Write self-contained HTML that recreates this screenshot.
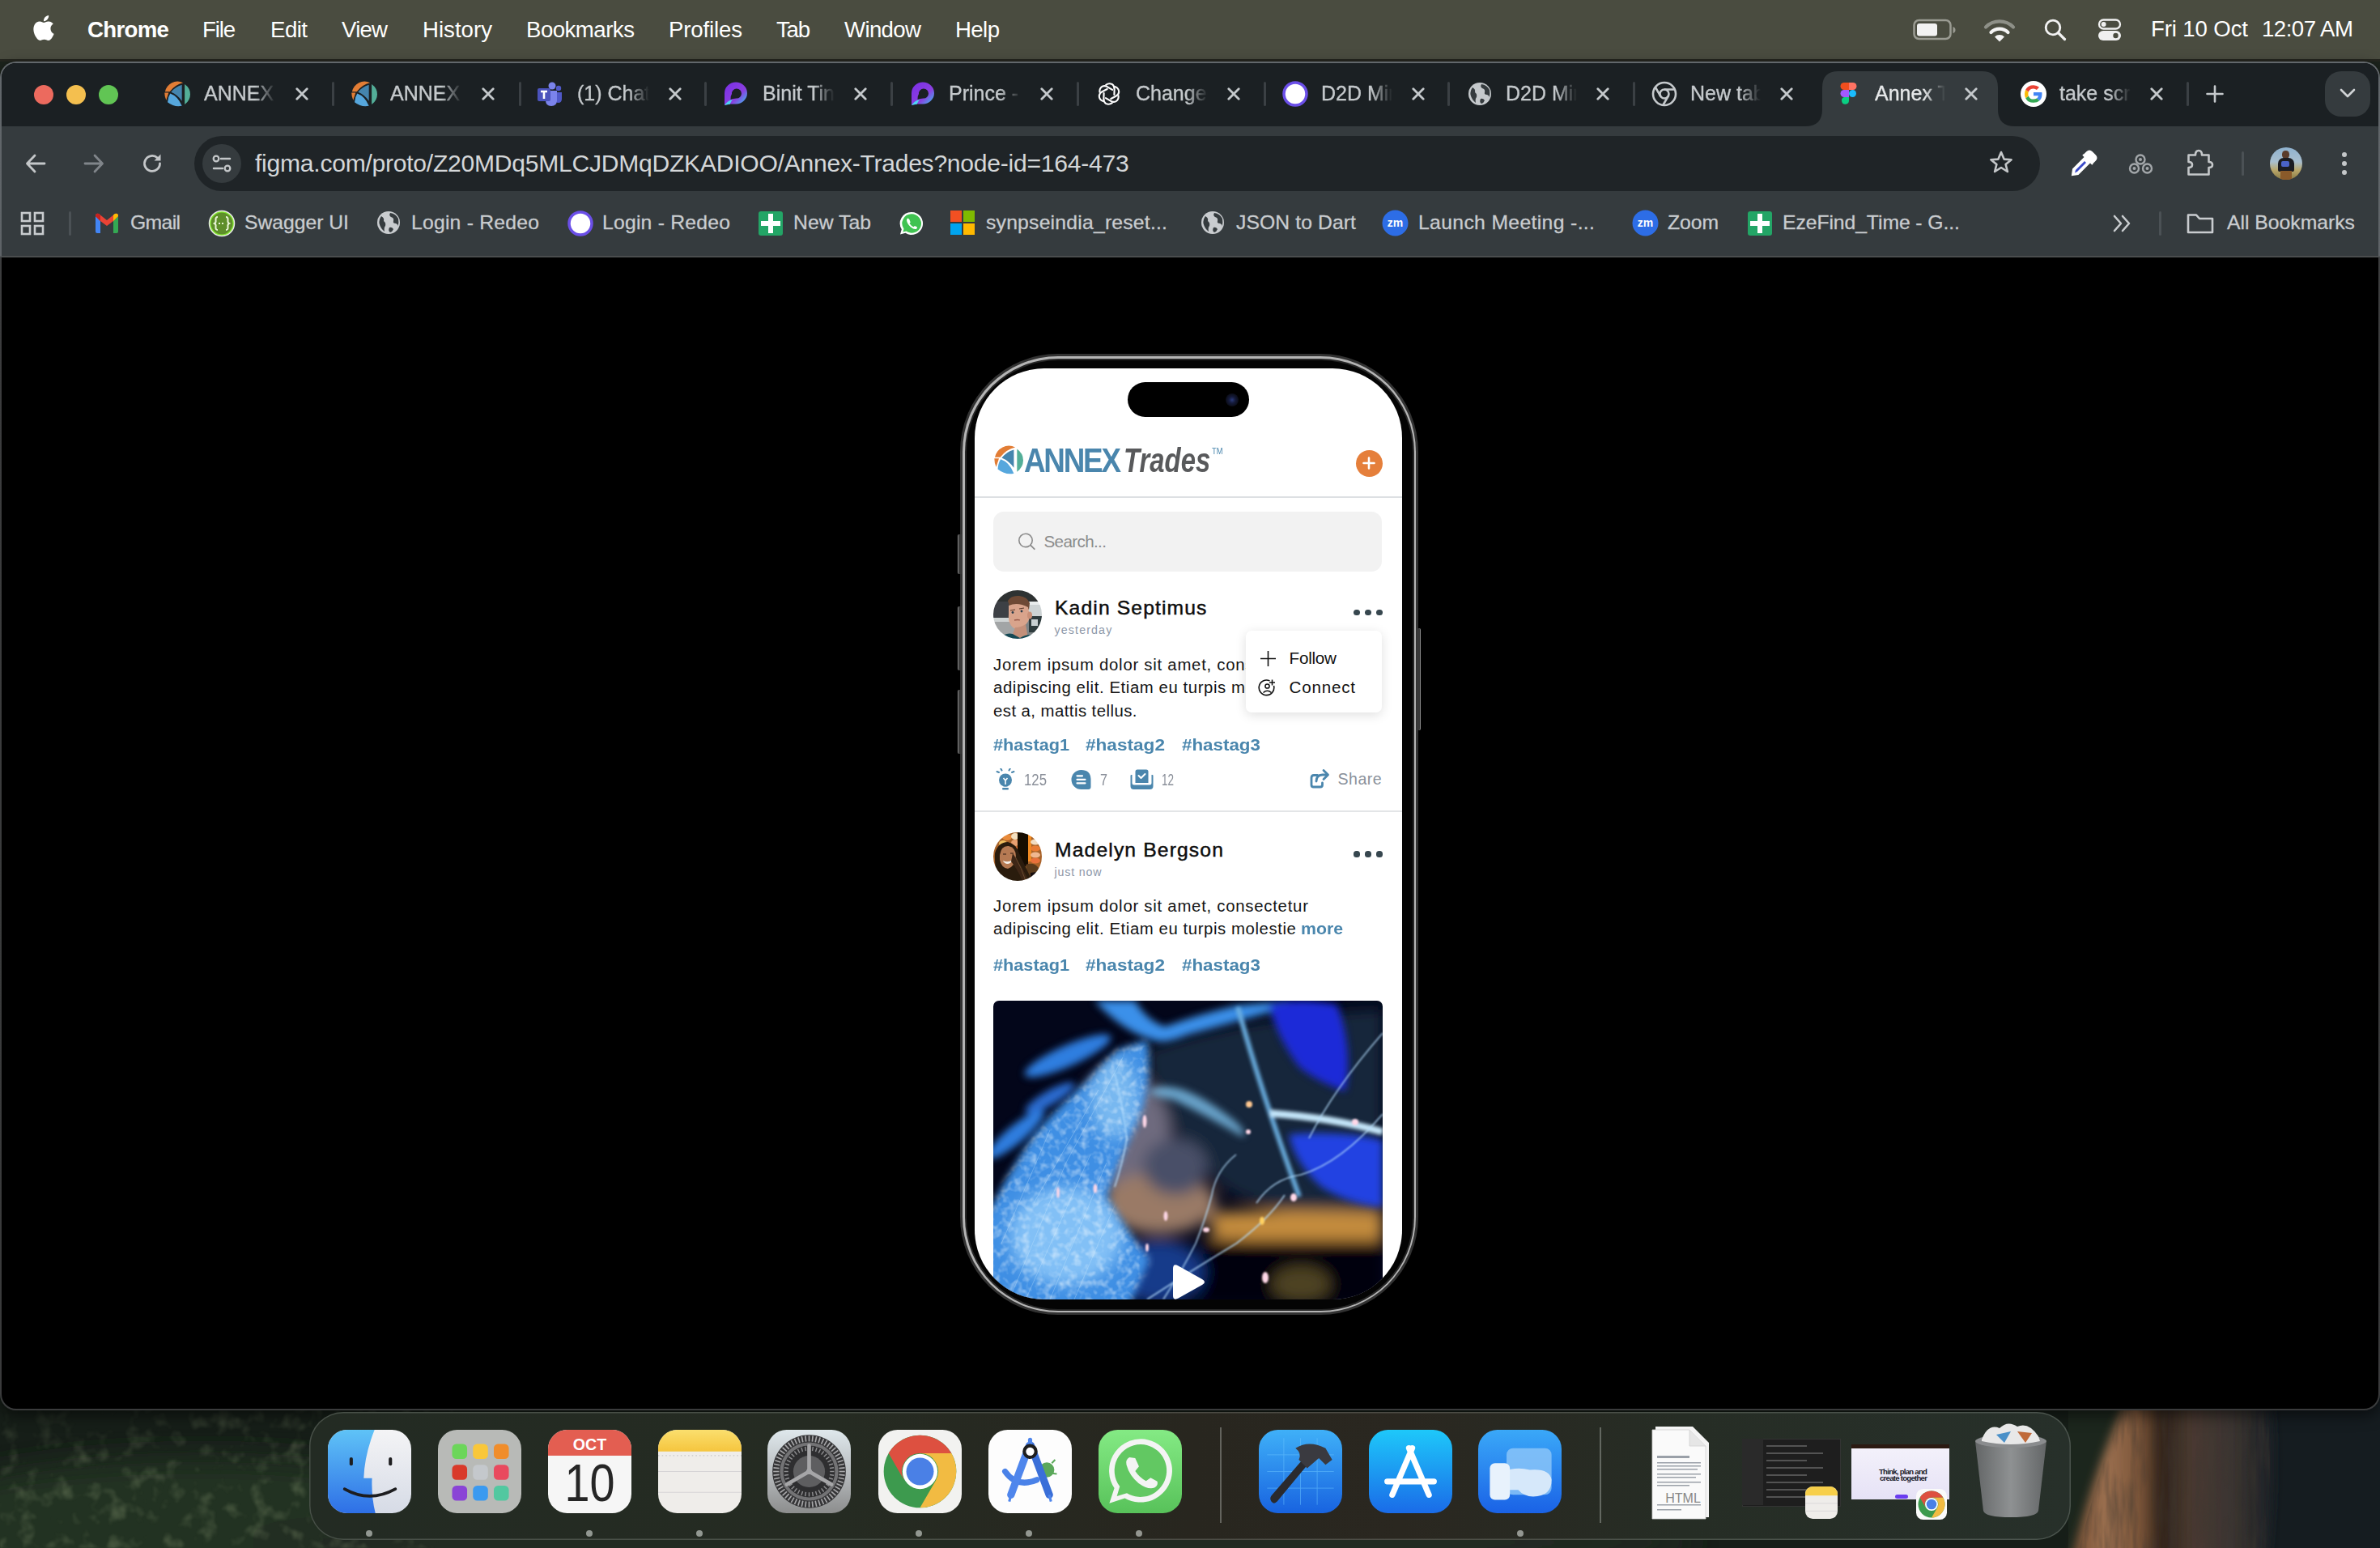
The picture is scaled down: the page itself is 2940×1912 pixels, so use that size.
<!DOCTYPE html><html><head><meta charset="utf-8"><style>
html,body{margin:0;padding:0;width:2940px;height:1912px;overflow:hidden;background:#1c231c;}
body{position:relative;font-family:"Liberation Sans",sans-serif;}
.a{position:absolute;}
.t{position:absolute;white-space:nowrap;line-height:1;}
</style></head><body>
<div class="a" style="left:0;top:1700px;width:2940px;height:212px;overflow:hidden;background:#19211a;"><svg width="2940" height="212" style="position:absolute;left:0;top:0"><defs><filter id="wb" x="-20%" y="-50%" width="140%" height="200%"><feGaussianBlur stdDeviation="18"/></filter><filter id="wb2"><feGaussianBlur stdDeviation="6"/></filter><filter id="leaf" x="0" y="0" width="100%" height="100%"><feTurbulence type="fractalNoise" baseFrequency="0.045" numOctaves="3" seed="7"/><feColorMatrix values="0 0 0 0 0.30  0 0 0 0 0.37  0 0 0 0 0.20  0 0 0 1.7 -0.88"/><feGaussianBlur stdDeviation="1.2"/></filter><linearGradient id="lm" x1="0" y1="0" x2="0.3" y2="1"><stop offset="0" stop-color="#000"/><stop offset="0.6" stop-color="#fff"/></linearGradient><mask id="lmask"><rect x="0" y="0" width="560" height="212" fill="url(#lm)"/></mask><linearGradient id="trunk" x1="0" y1="0" x2="1" y2="0"><stop offset="0" stop-color="#6e4a30"/><stop offset="0.18" stop-color="#9c7050"/><stop offset="0.35" stop-color="#7a5438"/><stop offset="0.45" stop-color="#2e221a"/><stop offset="0.6" stop-color="#4a3a30"/><stop offset="0.8" stop-color="#3a3430"/><stop offset="1" stop-color="#1a2026"/></linearGradient></defs><rect x="0" y="0" width="2940" height="212" fill="#161e18"/><g filter="url(#wb)"><ellipse cx="250" cy="180" rx="380" ry="80" fill="#243020"/><ellipse cx="1200" cy="205" rx="900" ry="45" fill="#222c20"/></g><g mask="url(#lmask)"><rect x="0" y="40" width="560" height="172" filter="url(#leaf)" opacity="0.55"/></g><rect x="2560" y="0" width="380" height="212" fill="#151c20"/><rect x="2555" y="0" width="80" height="212" fill="#1c261d"/><filter id="bark" x="0" y="0" width="100%" height="100%"><feTurbulence type="fractalNoise" baseFrequency="0.10 0.015" numOctaves="3" seed="9"/><feColorMatrix values="0 0 0 0 0.05  0 0 0 0 0.04  0 0 0 0 0.03  0 0 0 1.8 -0.7"/></filter><path d="M2626 30 L2805 30 Q2815 120 2800 240 L2555 240 Q2585 120 2626 30Z" fill="url(#trunk)" filter="url(#wb2)"/><clipPath id="tclip"><path d="M2626 30 L2800 30 Q2810 120 2796 240 L2562 240 Q2590 120 2626 30Z"/></clipPath><g clip-path="url(#tclip)"><rect x="2540" y="30" width="280" height="200" filter="url(#bark)" opacity="0.55"/></g></svg></div>
<div class="a" style="left:0px;top:0px;width:2940px;height:76px;background:#4a4c40;"></div>
<div class="a" style="left:0px;top:73px;width:2940px;height:3px;background:#25261f;"></div>
<svg class="a" style="left:41px;top:19px;overflow:visible;" width="26" height="31" viewBox="2.6 0 18.8 24"><path fill="#fff" d="M12.152 6.896c-.948 0-2.415-1.078-3.96-1.04-2.04.027-3.91 1.183-4.961 3.014-2.117 3.675-.546 9.103 1.519 12.09 1.013 1.454 2.208 3.09 3.792 3.039 1.52-.065 2.09-.987 3.935-.987 1.831 0 2.35.987 3.96.948 1.637-.026 2.676-1.48 3.676-2.948 1.156-1.688 1.636-3.325 1.662-3.415-.039-.013-3.182-1.221-3.22-4.857-.026-3.04 2.48-4.494 2.597-4.559-1.429-2.09-3.623-2.324-4.39-2.376-2-.156-3.675 1.09-4.61 1.09zM15.53 3.83c.843-1.012 1.4-2.427 1.245-3.83-1.207.052-2.662.805-3.532 1.818-.78.896-1.454 2.338-1.273 3.714 1.338.104 2.715-.688 3.559-1.701"/></svg>
<div class="t" style="left:108.0px;top:22.6px;font-size:27.62px;color:#ffffff;font-weight:700;letter-spacing:-0.669px;">Chrome</div>
<div class="t" style="left:250.0px;top:22.6px;font-size:27.62px;color:#ffffff;letter-spacing:-1.167px;">File</div>
<div class="t" style="left:334.0px;top:22.6px;font-size:27.62px;color:#ffffff;letter-spacing:-0.529px;">Edit</div>
<div class="t" style="left:422.0px;top:22.6px;font-size:27.62px;color:#ffffff;letter-spacing:-0.787px;">View</div>
<div class="t" style="left:522.0px;top:22.6px;font-size:27.62px;color:#ffffff;letter-spacing:0.012px;">History</div>
<div class="t" style="left:650.0px;top:22.6px;font-size:27.62px;color:#ffffff;letter-spacing:-0.516px;">Bookmarks</div>
<div class="t" style="left:826.0px;top:22.6px;font-size:27.62px;color:#ffffff;letter-spacing:-0.156px;">Profiles</div>
<div class="t" style="left:959.0px;top:22.6px;font-size:27.62px;color:#ffffff;letter-spacing:-1.263px;">Tab</div>
<div class="t" style="left:1043.0px;top:22.6px;font-size:27.62px;color:#ffffff;letter-spacing:-0.645px;">Window</div>
<div class="t" style="left:1180.0px;top:22.6px;font-size:27.62px;color:#ffffff;letter-spacing:-0.600px;">Help</div>
<div class="t" style="left:2657.0px;top:22.1px;font-size:27.62px;color:#ffffff;letter-spacing:-0.136px;">Fri 10 Oct</div>
<div class="t" style="left:2794.0px;top:22.1px;font-size:27.62px;color:#ffffff;letter-spacing:-0.526px;">12:07 AM</div>
<svg class="a" style="left:2362px;top:22px;" width="56" height="30" viewBox="0 0 56 30"><rect x="2.5" y="3" width="45" height="23" rx="6" fill="none" stroke="#9a9b92" stroke-width="2.5"/><rect x="6" y="7" width="25" height="15.5" rx="3" fill="#f2f2f2"/><path d="M50.5 11 q3 1 3 4 q0 3 -3 4z" fill="#9a9b92"/></svg>
<svg class="a" style="left:2450px;top:22px;" width="40" height="30" viewBox="0 0 40 30"><path d="M3 11.5 A24 24 0 0 1 37 11.5" fill="none" stroke="#8e9088" stroke-width="4.2" stroke-linecap="round"/><path d="M9.5 18 A15 15 0 0 1 30.5 18" fill="none" stroke="#f4f4f4" stroke-width="4.2" stroke-linecap="round"/><path d="M14 23.5 A8.5 8.5 0 0 1 26 23.5 L20 29.5z" fill="#f4f4f4"/></svg>
<svg class="a" style="left:2524px;top:22px;" width="30" height="30" viewBox="0 0 30 30"><circle cx="12" cy="12" r="8.8" fill="none" stroke="#f2f2f2" stroke-width="2.8"/><path d="M18.5 18.5 L26.5 26.5" stroke="#f2f2f2" stroke-width="3.2" stroke-linecap="round"/></svg>
<svg class="a" style="left:2590px;top:22px;" width="32" height="30" viewBox="0 0 32 30"><rect x="3" y="2.5" width="26" height="11" rx="5.5" fill="none" stroke="#f0f0f0" stroke-width="2.3"/><circle cx="8.6" cy="8" r="3" fill="#f0f0f0"/><rect x="2" y="16" width="28" height="12" rx="6" fill="#f0f0f0"/><circle cx="23.5" cy="22" r="3.2" fill="#4a4c40"/></svg>
<div class="a" style="left:0px;top:76px;width:2940px;height:1666px;background:linear-gradient(180deg,#62676b 0px,#5e6367 240px,#3c3d3e 242px,#3a3b3c 100%);border-radius:20px;box-shadow:0 6px 18px rgba(0,0,0,0.55);"></div>
<div class="a" style="left:2px;top:78px;width:2936px;height:1662px;background:#000;border-radius:18px;overflow:hidden;"></div>
<div class="a" style="left:2px;top:78px;width:2936px;height:78px;background:#1b2023;border-radius:18px 18px 0 0;"></div>
<div class="a" style="left:2px;top:156px;width:2936px;height:160px;background:#353b3e;"></div>
<div class="a" style="left:2px;top:316px;width:2936px;height:2px;background:#4a4d4e;"></div>
<div class="a" style="left:42px;top:105px;width:24px;height:24px;background:#ec6a5e;border-radius:50%;"></div>
<div class="a" style="left:82px;top:105px;width:24px;height:24px;background:#f4bf4f;border-radius:50%;"></div>
<div class="a" style="left:122px;top:105px;width:24px;height:24px;background:#61c554;border-radius:50%;"></div>
<svg class="a" style="left:2230px;top:88px;" width="260" height="68" viewBox="0 0 260 68"><path d="M0 68 Q21 68 21 47 L21 20 Q21 0 41 0 L218 0 Q238 0 238 20 L238 47 Q238 68 259 68 Z" fill="#353b3e"/></svg>
<svg class="a" style="left:203px;top:100px;" width="32" height="32" viewBox="0 0 36 36"><path d="M1 14.8 A17.5 17.5 0 0 1 26.1 2.5 Q15 5 7.6 14.8 Z" fill="#e27d35"/><path d="M0.3 16.3 L6 16.3 L2.6 26.7 Q0.3 22 0.3 16.3 Z" fill="#e27d35"/><path d="M9.4 15.6 Q15 8 24.4 5.4 L24.4 27.8 Q18 19 9.4 15.6 Z" fill="#4585ae"/><path d="M8.2 17.3 Q19 21 24.4 34.7 Q14 37 4.5 29.5 Q5 22 8.2 17.3 Z" fill="#56a7dd"/><path d="M28.3 4.5 Q36 10 36 18.5 Q36 27 28.3 32.7 Z" fill="#53ae98"/></svg>
<div class="a" style="left:252px;top:96px;width:89px;height:40px;overflow:hidden;-webkit-mask-image:linear-gradient(90deg,#000 0,#000 63px,transparent 89px);"><div class="t" style="left:0;top:7.4px;font-size:25.0px;color:#c5c9cc;-webkit-text-stroke:0.35px #c5c9cc;">ANNEX Trades</div></div>
<svg class="a" style="left:365px;top:108px;" width="16" height="16" viewBox="0 0 16 16"><path d="M1.8 1.8 L14.2 14.2 M14.2 1.8 L1.8 14.2" stroke="#c5c9cc" stroke-width="2.8" stroke-linecap="round"/></svg>
<div class="a" style="left:409.5px;top:101px;width:3px;height:30px;background:#3b4044;border-radius:2px;"></div>
<svg class="a" style="left:434px;top:100px;" width="32" height="32" viewBox="0 0 36 36"><path d="M1 14.8 A17.5 17.5 0 0 1 26.1 2.5 Q15 5 7.6 14.8 Z" fill="#e27d35"/><path d="M0.3 16.3 L6 16.3 L2.6 26.7 Q0.3 22 0.3 16.3 Z" fill="#e27d35"/><path d="M9.4 15.6 Q15 8 24.4 5.4 L24.4 27.8 Q18 19 9.4 15.6 Z" fill="#4585ae"/><path d="M8.2 17.3 Q19 21 24.4 34.7 Q14 37 4.5 29.5 Q5 22 8.2 17.3 Z" fill="#56a7dd"/><path d="M28.3 4.5 Q36 10 36 18.5 Q36 27 28.3 32.7 Z" fill="#53ae98"/></svg>
<div class="a" style="left:482px;top:96px;width:89px;height:40px;overflow:hidden;-webkit-mask-image:linear-gradient(90deg,#000 0,#000 63px,transparent 89px);"><div class="t" style="left:0;top:7.4px;font-size:25.0px;color:#c5c9cc;-webkit-text-stroke:0.35px #c5c9cc;">ANNEX Trades</div></div>
<svg class="a" style="left:595px;top:108px;" width="16" height="16" viewBox="0 0 16 16"><path d="M1.8 1.8 L14.2 14.2 M14.2 1.8 L1.8 14.2" stroke="#c5c9cc" stroke-width="2.8" stroke-linecap="round"/></svg>
<div class="a" style="left:640.5px;top:101px;width:3px;height:30px;background:#3b4044;border-radius:2px;"></div>
<svg class="a" style="left:663px;top:100px;" width="32" height="32" viewBox="0 0 32 32"><circle cx="19" cy="6" r="4.5" fill="#7b83eb"/><circle cx="27" cy="9" r="3.2" fill="#5059c9"/><path d="M23 14 H31 V22 Q31 27 26.5 27 Q23 27 23 22Z" fill="#5059c9"/><path d="M11 12 H25 V24 Q25 31 18 31 Q11 31 11 24Z" fill="#7b83eb"/><rect x="1" y="9" width="16" height="16" rx="2" fill="#4b53bc"/><path d="M5 13 H13 M9 13 V22" stroke="#fff" stroke-width="2.6"/></svg>
<div class="a" style="left:713px;top:96px;width:89px;height:40px;overflow:hidden;-webkit-mask-image:linear-gradient(90deg,#000 0,#000 63px,transparent 89px);"><div class="t" style="left:0;top:7.4px;font-size:25.0px;color:#c5c9cc;-webkit-text-stroke:0.35px #c5c9cc;">(1) Chat | Microsoft Teams</div></div>
<svg class="a" style="left:826px;top:108px;" width="16" height="16" viewBox="0 0 16 16"><path d="M1.8 1.8 L14.2 14.2 M14.2 1.8 L1.8 14.2" stroke="#c5c9cc" stroke-width="2.8" stroke-linecap="round"/></svg>
<div class="a" style="left:869.5px;top:101px;width:3px;height:30px;background:#3b4044;border-radius:2px;"></div>
<svg class="a" style="left:893px;top:100px;" width="32" height="32" viewBox="0 0 32 32"><defs><linearGradient id="lg909" x1="0" y1="0" x2="1" y2="1"><stop offset="0" stop-color="#7a2ee6"/><stop offset="0.6" stop-color="#8b3fe0"/><stop offset="1" stop-color="#2fd1f0"/></linearGradient></defs><path d="M2 30 L2 15 A14 13.5 0 1 1 16 28.5 L9 28.5 Q3 29 2 30Z" fill="url(#lg909)"/><path d="M9.5 23 Q9 19 11 16 A6 6 0 1 1 16.5 21.5 Q12.5 21.5 9.5 23Z" fill="#1b2023"/><path d="M2 30 Q6 24 12 23 Q9 27 9 28.5 Z" fill="#4fd4f5"/></svg>
<div class="a" style="left:942px;top:96px;width:89px;height:40px;overflow:hidden;-webkit-mask-image:linear-gradient(90deg,#000 0,#000 63px,transparent 89px);"><div class="t" style="left:0;top:7.4px;font-size:25.0px;color:#c5c9cc;-webkit-text-stroke:0.35px #c5c9cc;">Binit Tin</div></div>
<svg class="a" style="left:1055px;top:108px;" width="16" height="16" viewBox="0 0 16 16"><path d="M1.8 1.8 L14.2 14.2 M14.2 1.8 L1.8 14.2" stroke="#c5c9cc" stroke-width="2.8" stroke-linecap="round"/></svg>
<div class="a" style="left:1099.5px;top:101px;width:3px;height:30px;background:#3b4044;border-radius:2px;"></div>
<svg class="a" style="left:1124px;top:100px;" width="32" height="32" viewBox="0 0 32 32"><defs><linearGradient id="lg1140" x1="0" y1="0" x2="1" y2="1"><stop offset="0" stop-color="#7a2ee6"/><stop offset="0.6" stop-color="#8b3fe0"/><stop offset="1" stop-color="#2fd1f0"/></linearGradient></defs><path d="M2 30 L2 15 A14 13.5 0 1 1 16 28.5 L9 28.5 Q3 29 2 30Z" fill="url(#lg1140)"/><path d="M9.5 23 Q9 19 11 16 A6 6 0 1 1 16.5 21.5 Q12.5 21.5 9.5 23Z" fill="#1b2023"/><path d="M2 30 Q6 24 12 23 Q9 27 9 28.5 Z" fill="#4fd4f5"/></svg>
<div class="a" style="left:1172px;top:96px;width:89px;height:40px;overflow:hidden;-webkit-mask-image:linear-gradient(90deg,#000 0,#000 63px,transparent 89px);"><div class="t" style="left:0;top:7.4px;font-size:25.0px;color:#c5c9cc;-webkit-text-stroke:0.35px #c5c9cc;">Prince - Loop</div></div>
<svg class="a" style="left:1285px;top:108px;" width="16" height="16" viewBox="0 0 16 16"><path d="M1.8 1.8 L14.2 14.2 M14.2 1.8 L1.8 14.2" stroke="#c5c9cc" stroke-width="2.8" stroke-linecap="round"/></svg>
<div class="a" style="left:1329.5px;top:101px;width:3px;height:30px;background:#3b4044;border-radius:2px;"></div>
<svg class="a" style="left:1354px;top:100px;" width="32" height="32" viewBox="0 0 32 32"><path d="M12.2 4.8 Q16 2 20 4.2 Q23 6.5 22.6 10.5 L22.4 17" fill="none" stroke="#fff" stroke-width="2.1" stroke-linecap="round" transform="rotate(0 16 16)"/><path d="M12.2 4.8 Q16 2 20 4.2 Q23 6.5 22.6 10.5 L22.4 17" fill="none" stroke="#fff" stroke-width="2.1" stroke-linecap="round" transform="rotate(60 16 16)"/><path d="M12.2 4.8 Q16 2 20 4.2 Q23 6.5 22.6 10.5 L22.4 17" fill="none" stroke="#fff" stroke-width="2.1" stroke-linecap="round" transform="rotate(120 16 16)"/><path d="M12.2 4.8 Q16 2 20 4.2 Q23 6.5 22.6 10.5 L22.4 17" fill="none" stroke="#fff" stroke-width="2.1" stroke-linecap="round" transform="rotate(180 16 16)"/><path d="M12.2 4.8 Q16 2 20 4.2 Q23 6.5 22.6 10.5 L22.4 17" fill="none" stroke="#fff" stroke-width="2.1" stroke-linecap="round" transform="rotate(240 16 16)"/><path d="M12.2 4.8 Q16 2 20 4.2 Q23 6.5 22.6 10.5 L22.4 17" fill="none" stroke="#fff" stroke-width="2.1" stroke-linecap="round" transform="rotate(300 16 16)"/></svg>
<div class="a" style="left:1403px;top:96px;width:89px;height:40px;overflow:hidden;-webkit-mask-image:linear-gradient(90deg,#000 0,#000 63px,transparent 89px);"><div class="t" style="left:0;top:7.4px;font-size:25.0px;color:#c5c9cc;-webkit-text-stroke:0.35px #c5c9cc;">ChangeGPT</div></div>
<svg class="a" style="left:1516px;top:108px;" width="16" height="16" viewBox="0 0 16 16"><path d="M1.8 1.8 L14.2 14.2 M14.2 1.8 L1.8 14.2" stroke="#c5c9cc" stroke-width="2.8" stroke-linecap="round"/></svg>
<div class="a" style="left:1560.5px;top:101px;width:3px;height:30px;background:#3b4044;border-radius:2px;"></div>
<svg class="a" style="left:1584px;top:100px;" width="32" height="32" viewBox="0 0 32 32"><circle cx="16" cy="16" r="14" fill="#fff" stroke="#6b4fe8" stroke-width="3.5"/></svg>
<div class="a" style="left:1632px;top:96px;width:88px;height:40px;overflow:hidden;-webkit-mask-image:linear-gradient(90deg,#000 0,#000 62px,transparent 88px);"><div class="t" style="left:0;top:7.4px;font-size:25.0px;color:#c5c9cc;-webkit-text-stroke:0.35px #c5c9cc;">D2D Mini</div></div>
<svg class="a" style="left:1744px;top:108px;" width="16" height="16" viewBox="0 0 16 16"><path d="M1.8 1.8 L14.2 14.2 M14.2 1.8 L1.8 14.2" stroke="#c5c9cc" stroke-width="2.8" stroke-linecap="round"/></svg>
<div class="a" style="left:1787.5px;top:101px;width:3px;height:30px;background:#3b4044;border-radius:2px;"></div>
<svg class="a" style="left:1813px;top:101px;" width="30" height="30" viewBox="0 0 30 30"><circle cx="15" cy="15" r="14" fill="#c5c9cc"/><path d="M6 7 Q10 9 9 13 Q12 15 11 19 Q9 21 10 26 Q5 22 3.5 16 Q3 11 6 7Z M17 3 Q15 6 18 8 Q22 9 21 13 Q20 16 24 16 Q27 17 26.5 20 Q28 15 27 10 Q24 4 17 3Z M16 21 Q19 20 21 23 Q20 26 17 27 Q14 25 16 21Z" fill="#353b3e"/></svg>
<div class="a" style="left:1860px;top:96px;width:88px;height:40px;overflow:hidden;-webkit-mask-image:linear-gradient(90deg,#000 0,#000 62px,transparent 88px);"><div class="t" style="left:0;top:7.4px;font-size:25.0px;color:#c5c9cc;-webkit-text-stroke:0.35px #c5c9cc;">D2D Mini</div></div>
<svg class="a" style="left:1972px;top:108px;" width="16" height="16" viewBox="0 0 16 16"><path d="M1.8 1.8 L14.2 14.2 M14.2 1.8 L1.8 14.2" stroke="#c5c9cc" stroke-width="2.8" stroke-linecap="round"/></svg>
<div class="a" style="left:2016.5px;top:101px;width:3px;height:30px;background:#3b4044;border-radius:2px;"></div>
<svg class="a" style="left:2040px;top:100px;" width="32" height="32" viewBox="0 0 32 32"><circle cx="16" cy="16" r="14" fill="none" stroke="#c5c9cc" stroke-width="2.6"/><circle cx="16" cy="16" r="5.5" fill="none" stroke="#c5c9cc" stroke-width="2.6"/><path d="M16 10.5 H28.5 M11.3 18.8 L5 8 M20.7 18.8 L14.5 29.5" stroke="#c5c9cc" stroke-width="2.6"/></svg>
<div class="a" style="left:2088px;top:96px;width:87px;height:40px;overflow:hidden;-webkit-mask-image:linear-gradient(90deg,#000 0,#000 61px,transparent 87px);"><div class="t" style="left:0;top:7.4px;font-size:25.0px;color:#c5c9cc;-webkit-text-stroke:0.35px #c5c9cc;">New tab</div></div>
<svg class="a" style="left:2199px;top:108px;" width="16" height="16" viewBox="0 0 16 16"><path d="M1.8 1.8 L14.2 14.2 M14.2 1.8 L1.8 14.2" stroke="#c5c9cc" stroke-width="2.8" stroke-linecap="round"/></svg>
<svg class="a" style="left:2272px;top:101px;" width="24" height="30" viewBox="0 0 24 30"><path d="M6 1 H12 V10 H6 A4.5 4.5 0 0 1 6 1Z" fill="#f24e1e"/><path d="M12 1 H17 A4.5 4.5 0 0 1 17 10 H12Z" fill="#ff7262"/><path d="M6 10 H12 V19 H6 A4.5 4.5 0 0 1 6 10Z" fill="#a259ff"/><circle cx="16.5" cy="14.5" r="4.5" fill="#1abcfe"/><path d="M6 19 H12 V23.5 A4.5 4.5 0 1 1 6 19Z" fill="#0acf83"/></svg>
<div class="a" style="left:2316px;top:96px;width:87px;height:40px;overflow:hidden;-webkit-mask-image:linear-gradient(90deg,#000 0,#000 61px,transparent 87px);"><div class="t" style="left:0;top:7.4px;font-size:25.0px;color:#e6e8e9;-webkit-text-stroke:0.35px #e6e8e9;">Annex Trades</div></div>
<svg class="a" style="left:2427px;top:108px;" width="16" height="16" viewBox="0 0 16 16"><path d="M1.8 1.8 L14.2 14.2 M14.2 1.8 L1.8 14.2" stroke="#c5c9cc" stroke-width="2.8" stroke-linecap="round"/></svg>
<svg class="a" style="left:2496px;top:100px;" width="32" height="32" viewBox="0 0 32 32"><circle cx="16" cy="16" r="16" fill="#fff"/><path d="M26.5 16.3 Q26.5 15 26.3 14 H16 V18.2 H22 Q21.6 20.3 19.9 21.6 L23.4 24.3 Q26.5 21.5 26.5 16.3Z" fill="#4285f4"/><path d="M16 26.8 Q20.8 26.8 23.4 24.3 L19.9 21.6 Q18.4 22.6 16 22.6 Q11.4 22.6 9.8 18.4 L6.2 21.2 Q8.8 26.8 16 26.8Z" fill="#34a853"/><path d="M9.8 18.4 Q9.4 17.2 9.4 16 Q9.4 14.8 9.8 13.6 L6.2 10.8 Q5 13.2 5 16 Q5 18.8 6.2 21.2Z" fill="#fbbc05"/><path d="M16 9.4 Q18.1 9.4 19.9 10.9 L23 7.8 Q20.2 5.2 16 5.2 Q8.8 5.2 6.2 10.8 L9.8 13.6 Q11.4 9.4 16 9.4Z" fill="#ea4335"/></svg>
<div class="a" style="left:2544px;top:96px;width:88px;height:40px;overflow:hidden;-webkit-mask-image:linear-gradient(90deg,#000 0,#000 62px,transparent 88px);"><div class="t" style="left:0;top:7.4px;font-size:25.0px;color:#c5c9cc;-webkit-text-stroke:0.35px #c5c9cc;">take screenshot</div></div>
<svg class="a" style="left:2656px;top:108px;" width="16" height="16" viewBox="0 0 16 16"><path d="M1.8 1.8 L14.2 14.2 M14.2 1.8 L1.8 14.2" stroke="#c5c9cc" stroke-width="2.8" stroke-linecap="round"/></svg>
<div class="a" style="left:2700.5px;top:101px;width:3px;height:30px;background:#3b4044;border-radius:2px;"></div>
<svg class="a" style="left:2725px;top:105px;" width="22" height="22" viewBox="0 0 22 22"><path d="M11 1.5 V20.5 M1.5 11 H20.5" stroke="#c5c9cc" stroke-width="2.6" stroke-linecap="round"/></svg>
<div class="a" style="left:2872px;top:88px;width:56px;height:56px;background:#353b3e;border-radius:20px;"></div>
<svg class="a" style="left:2890px;top:108px;" width="20" height="14" viewBox="0 0 20 14"><path d="M2 3 L10 11 L18 3" fill="none" stroke="#d0d3d5" stroke-width="2.6" stroke-linecap="round" stroke-linejoin="round"/></svg>
<svg class="a" style="left:30px;top:188px;" width="28" height="28" viewBox="0 0 28 28"><path d="M25 14 H4 M13 4 L3.5 14 L13 24" fill="none" stroke="#c4c7c9" stroke-width="2.8" stroke-linecap="round" stroke-linejoin="round"/></svg>
<svg class="a" style="left:102px;top:188px;" width="28" height="28" viewBox="0 0 28 28"><path d="M3 14 H24 M15 4 L24.5 14 L15 24" fill="none" stroke="#80858a" stroke-width="2.8" stroke-linecap="round" stroke-linejoin="round"/></svg>
<svg class="a" style="left:174px;top:188px;" width="28" height="28" viewBox="0 0 28 28"><path d="M23.5 14 A9.5 9.5 0 1 1 20.5 7" fill="none" stroke="#c4c7c9" stroke-width="2.8" stroke-linecap="round"/><path d="M24.5 2.5 V10.5 H16.5z" fill="#c4c7c9"/></svg>
<div class="a" style="left:240px;top:168px;width:2280px;height:68px;background:#1f2427;border-radius:34px;"></div>
<div class="a" style="left:250px;top:178px;width:48px;height:48px;background:#353b3e;border-radius:50%;"></div>
<svg class="a" style="left:258px;top:186px;" width="32" height="32" viewBox="0 0 32 32"><circle cx="9" cy="10" r="3.3" fill="none" stroke="#c4c7c9" stroke-width="2.3"/><path d="M15 10 H26" stroke="#c4c7c9" stroke-width="2.5" stroke-linecap="round"/><circle cx="23" cy="22" r="3.3" fill="none" stroke="#c4c7c9" stroke-width="2.3"/><path d="M6 22 H17" stroke="#c4c7c9" stroke-width="2.5" stroke-linecap="round"/></svg>
<div class="t" style="left:315.0px;top:186.7px;font-size:30.09px;color:#d4d7d9;letter-spacing:-0.254px;">figma.com/proto/Z20MDq5MLCJDMqDZKADIOO/Annex-Trades?node-id=164-473</div>
<svg class="a" style="left:2456px;top:185px;" width="32" height="32" viewBox="0 0 32 32"><path d="M16 3 L19.6 11.6 L28.6 12.2 L21.6 18 L23.9 27 L16 22 L8.1 27 L10.4 18 L3.4 12.2 L12.4 11.6Z" fill="none" stroke="#c4c7c9" stroke-width="2.6" stroke-linejoin="round"/></svg>
<svg class="a" style="left:2554px;top:184px;" width="38" height="38" viewBox="0 0 38 38"><path d="M6 32 L7 25 L22 10 L28 16 L13 31 Z" fill="#fff" stroke="#fff" stroke-width="2"/><path d="M9 29.5 L10 26 L21 15 L23 17 L12 28z" fill="#3949c8"/><path d="M19 7 L31 19 M24 4 Q27 1 30 4 L34 8 Q37 11 34 14 L30 18 L20 8Z" fill="#fff" stroke="#fff" stroke-width="2" stroke-linejoin="round"/></svg>
<svg class="a" style="left:2628px;top:186px;" width="34" height="34" viewBox="0 0 34 34"><g fill="none" stroke="#a3a7aa" stroke-width="2.4"><circle cx="16" cy="11" r="5.5"/><circle cx="8.5" cy="22" r="5.5"/><circle cx="24.5" cy="22" r="5.5"/></g><g fill="#a3a7aa"><circle cx="16" cy="11" r="2"/><circle cx="8.5" cy="22" r="2"/><circle cx="24.5" cy="22" r="2"/></g></svg>
<svg class="a" style="left:2700px;top:183px;" width="36" height="36" viewBox="0 0 36 36"><path d="M3.5 8.5 H12 Q12 3 16 3 Q20 3 20 8.5 H28.5 V17 Q33 17 33 20.5 Q33 24 28.5 24 V32.5 H3.5 V24 Q8 24 8 20.5 Q8 17 3.5 17 Z" fill="none" stroke="#c4c7c9" stroke-width="2.6" stroke-linejoin="round"/></svg>
<div class="a" style="left:2768.5px;top:187px;width:3px;height:30px;background:#4b5155;border-radius:2px;"></div>
<div class="a" style="left:2804px;top:182px;width:40px;height:40px;border-radius:50%;overflow:hidden;background:linear-gradient(180deg,#8fb2cf 0%,#a9bfcf 45%,#b9a76a 70%,#8a7a45 100%);"><div class="a" style="left:15px;top:4px;width:9px;height:10px;border-radius:45%;background:#5a3b2a;"></div><div class="a" style="left:10px;top:13px;width:20px;height:17px;border-radius:7px 7px 2px 2px;background:#1b1c22;"></div><div class="a" style="left:14px;top:17px;width:10px;height:7px;background:#4a62c8;border-radius:2px;"></div><div class="a" style="left:13px;top:29px;width:14px;height:12px;background:#8a5a2a;"></div></div>
<div class="a" style="left:2893px;top:188px;width:6px;height:6px;background:#c4c7c9;border-radius:50%;"></div>
<div class="a" style="left:2893px;top:199px;width:6px;height:6px;background:#c4c7c9;border-radius:50%;"></div>
<div class="a" style="left:2893px;top:210px;width:6px;height:6px;background:#c4c7c9;border-radius:50%;"></div>
<svg class="a" style="left:24px;top:260px;" width="32" height="32" viewBox="0 0 32 32"><g fill="none" stroke="#c9cccf" stroke-width="2.6"><rect x="3" y="3" width="10" height="10"/><rect x="19" y="3" width="10" height="10"/><rect x="3" y="19" width="10" height="10"/><rect x="19" y="19" width="10" height="10"/></g></svg>
<div class="a" style="left:84.5px;top:261px;width:3px;height:30px;background:#4b5155;border-radius:2px;"></div>
<svg class="a" style="left:115px;top:258px;" width="34" height="34" viewBox="0 0 34 34"><path d="M3 9 L3 28 Q3 30 5 30 L9 30 L9 15 Z" fill="#4285f4"/><path d="M25 30 L29 30 Q31 30 31 28 L31 9 L25 15Z" fill="#34a853"/><path d="M3 9 Q3 5 7 6 L17 14 L27 6 Q31 5 31 9 L25 15 L17 21 L9 15 Z" fill="#ea4335"/><path d="M25 15 L31 9 Q31 5 27 6 L25 7.5Z" fill="#fbbc04"/><path d="M3 9 Q3 5 7 6 L9 7.5 L9 15 Z" fill="#c5221f"/></svg>
<div class="t" style="left:161.0px;top:263.1px;font-size:24.71px;color:#c9cccf;letter-spacing:-0.632px;-webkit-text-stroke:0.3px #c9cccf;">Gmail</div>
<svg class="a" style="left:257px;top:259px;" width="34" height="34" viewBox="0 0 34 34"><circle cx="17" cy="17" r="15.5" fill="#85ea2d" stroke="#e8e8e8" stroke-width="1.5"/><circle cx="17" cy="17" r="13.5" fill="#5e8e2a"/><path d="M12 9 Q9 9 9.5 13 Q10 16 8 17 Q10 18 9.5 21 Q9 25 12 25 M22 9 Q25 9 24.5 13 Q24 16 26 17 Q24 18 24.5 21 Q25 25 22 25" fill="none" stroke="#e9f4d6" stroke-width="2"/><path d="M13 17 H21" stroke="#e9f4d6" stroke-width="2" stroke-dasharray="2 2"/></svg>
<div class="t" style="left:302.0px;top:263.1px;font-size:24.71px;color:#c9cccf;letter-spacing:-0.011px;-webkit-text-stroke:0.3px #c9cccf;">Swagger UI</div>
<svg class="a" style="left:465px;top:260px;" width="30" height="30" viewBox="0 0 30 30"><circle cx="15" cy="15" r="14" fill="#c9cccf"/><path d="M6 7 Q10 9 9 13 Q12 15 11 19 Q9 21 10 26 Q5 22 3.5 16 Q3 11 6 7Z M17 3 Q15 6 18 8 Q22 9 21 13 Q20 16 24 16 Q27 17 26.5 20 Q28 15 27 10 Q24 4 17 3Z M16 21 Q19 20 21 23 Q20 26 17 27 Q14 25 16 21Z" fill="#353b3e"/></svg>
<div class="t" style="left:508.0px;top:263.1px;font-size:24.71px;color:#c9cccf;letter-spacing:0.230px;-webkit-text-stroke:0.3px #c9cccf;">Login - Redeo</div>
<svg class="a" style="left:700px;top:259px;" width="34" height="34" viewBox="0 0 34 34"><circle cx="17" cy="17" r="14" fill="#fff" stroke="#6b4fe8" stroke-width="3.5"/></svg>
<div class="t" style="left:744.0px;top:263.1px;font-size:24.71px;color:#c9cccf;letter-spacing:0.230px;-webkit-text-stroke:0.3px #c9cccf;">Login - Redeo</div>
<svg class="a" style="left:936px;top:260px;" width="32" height="32" viewBox="0 0 32 32"><rect x="1" y="1" width="30" height="30" rx="3" fill="#23a566"/><path d="M13 4 H19 V13 H28 V19 H19 V28 H13 V19 H4 V13 H13Z" fill="#fff"/></svg>
<div class="t" style="left:980.0px;top:263.1px;font-size:24.71px;color:#c9cccf;letter-spacing:0.052px;-webkit-text-stroke:0.3px #c9cccf;">New Tab</div>
<svg class="a" style="left:1109px;top:259px;" width="34" height="34" viewBox="0 0 34 34"><path d="M17 3 A14 14 0 1 1 9.5 28.8 L3 30.5 L4.8 24.3 A14 14 0 0 1 17 3Z" fill="#fff"/><path d="M17 5.3 A11.7 11.7 0 1 1 10.5 26.5 L6.4 27.6 L7.5 23.7 A11.7 11.7 0 0 1 17 5.3Z" fill="#40c351"/><path d="M12.5 10.5 Q11 11 11 13 Q11.5 17.5 16 21.5 Q20 24.5 22.5 24 Q24 23.5 24 21.5 L21 20 L19.5 21.3 Q16.5 20 14.5 17 L15.7 15.5 L14.3 12 Z" fill="#fff"/></svg>
<svg class="a" style="left:1172px;top:258px;" width="34" height="34" viewBox="0 0 34 34"><rect x="2" y="2" width="14" height="14" fill="#f25022"/><rect x="18" y="2" width="14" height="14" fill="#7fba00"/><rect x="2" y="18" width="14" height="14" fill="#00a4ef"/><rect x="18" y="18" width="14" height="14" fill="#ffb900"/></svg>
<div class="t" style="left:1218.0px;top:263.1px;font-size:24.71px;color:#c9cccf;letter-spacing:0.223px;-webkit-text-stroke:0.3px #c9cccf;">synpseindia_reset...</div>
<svg class="a" style="left:1483px;top:260px;" width="30" height="30" viewBox="0 0 30 30"><circle cx="15" cy="15" r="14" fill="#c9cccf"/><path d="M6 7 Q10 9 9 13 Q12 15 11 19 Q9 21 10 26 Q5 22 3.5 16 Q3 11 6 7Z M17 3 Q15 6 18 8 Q22 9 21 13 Q20 16 24 16 Q27 17 26.5 20 Q28 15 27 10 Q24 4 17 3Z M16 21 Q19 20 21 23 Q20 26 17 27 Q14 25 16 21Z" fill="#353b3e"/></svg>
<div class="t" style="left:1527.0px;top:263.1px;font-size:24.71px;color:#c9cccf;letter-spacing:0.098px;-webkit-text-stroke:0.3px #c9cccf;">JSON to Dart</div>
<svg class="a" style="left:1707px;top:259px;" width="33" height="33" viewBox="0 0 33 33"><circle cx="16.5" cy="16.5" r="16" fill="#2d6de6"/><text x="16.5" y="21" text-anchor="middle" font-family="Liberation Sans" font-weight="700" font-size="14" fill="#fff">zm</text></svg>
<div class="t" style="left:1752.0px;top:263.1px;font-size:24.71px;color:#c9cccf;letter-spacing:0.359px;-webkit-text-stroke:0.3px #c9cccf;">Launch Meeting -...</div>
<svg class="a" style="left:2016px;top:259px;" width="33" height="33" viewBox="0 0 33 33"><circle cx="16.5" cy="16.5" r="16" fill="#2d6de6"/><text x="16.5" y="21" text-anchor="middle" font-family="Liberation Sans" font-weight="700" font-size="14" fill="#fff">zm</text></svg>
<div class="t" style="left:2060.0px;top:263.1px;font-size:24.71px;color:#c9cccf;letter-spacing:-0.054px;-webkit-text-stroke:0.3px #c9cccf;">Zoom</div>
<svg class="a" style="left:2158px;top:260px;" width="32" height="32" viewBox="0 0 32 32"><rect x="1" y="1" width="30" height="30" rx="3" fill="#23a566"/><path d="M13 4 H19 V13 H28 V19 H19 V28 H13 V19 H4 V13 H13Z" fill="#fff"/></svg>
<div class="t" style="left:2202.0px;top:263.1px;font-size:24.71px;color:#c9cccf;letter-spacing:-0.064px;-webkit-text-stroke:0.3px #c9cccf;">EzeFind_Time - G...</div>
<svg class="a" style="left:2608px;top:263px;" width="28" height="26" viewBox="0 0 28 26"><path d="M4 4 L12 13 L4 22 M14 4 L22 13 L14 22" fill="none" stroke="#c9cccf" stroke-width="2.6" stroke-linecap="round" stroke-linejoin="round"/></svg>
<div class="a" style="left:2666.5px;top:261px;width:3px;height:30px;background:#4b5155;border-radius:2px;"></div>
<svg class="a" style="left:2700px;top:262px;" width="36" height="28" viewBox="0 0 36 28"><path d="M3 3.5 H13 L17 8 H33 V25 H3 Z" fill="none" stroke="#c9cccf" stroke-width="2.6" stroke-linejoin="round"/></svg>
<div class="t" style="left:2751.0px;top:263.1px;font-size:24.71px;color:#c9cccf;letter-spacing:0.007px;-webkit-text-stroke:0.3px #c9cccf;">All Bookmarks</div>
<div class="a" style="left:1186px;top:437px;width:566px;height:1187px;border-radius:121px;background:rgba(110,110,110,0.45);"></div>
<div class="a" style="left:1189px;top:440px;width:560px;height:1181px;border-radius:118px;background:#b4b4b4;"></div>
<div class="a" style="left:1191.5px;top:442.5px;width:555px;height:1176px;border-radius:115.5px;background:#262626;"></div>
<div class="a" style="left:1193.5px;top:444.5px;width:551px;height:1172px;border-radius:113.5px;background:#040404;"></div>
<div class="a" style="left:1183px;top:660px;width:4px;height:49px;background:#3a3a3a;border-radius:2px 0 0 2px;border-left:1px solid #8a8a8a;"></div>
<div class="a" style="left:1183px;top:749px;width:4px;height:79px;background:#3a3a3a;border-radius:2px 0 0 2px;border-left:1px solid #8a8a8a;"></div>
<div class="a" style="left:1183px;top:852px;width:4px;height:79px;background:#3a3a3a;border-radius:2px 0 0 2px;border-left:1px solid #8a8a8a;"></div>
<div class="a" style="left:1750px;top:776px;width:4px;height:126px;background:#3a3a3a;border-radius:0 2px 2px 0;border-right:1px solid #8a8a8a;"></div>
<div class="a" style="left:1204px;top:455px;width:528px;height:1150px;border-radius:86px;background:#fff;overflow:hidden;">
<div class="a" style="left:189px;top:17px;width:150px;height:43px;background:#000;border-radius:22px;"></div>
<div class="a" style="left:310px;top:31px;width:16px;height:16px;background:radial-gradient(circle at 50% 50%,#2a3a7a 0%,#141a3a 35%,#0b0d18 70%);border-radius:50%;"></div>
<svg class="a" style="left:24px;top:95px;" width="36" height="36" viewBox="0 0 36 36"><path d="M1 14.8 A17.5 17.5 0 0 1 26.1 2.5 Q15 5 7.6 14.8 Z" fill="#e27d35"/><path d="M0.3 16.3 L6 16.3 L2.6 26.7 Q0.3 22 0.3 16.3 Z" fill="#e27d35"/><path d="M9.4 15.6 Q15 8 24.4 5.4 L24.4 27.8 Q18 19 9.4 15.6 Z" fill="#4585ae"/><path d="M8.2 17.3 Q19 21 24.4 34.7 Q14 37 4.5 29.5 Q5 22 8.2 17.3 Z" fill="#56a7dd"/><path d="M28.3 4.5 Q36 10 36 18.5 Q36 27 28.3 32.7 Z" fill="#53ae98"/></svg>
<div class="t" style="left:61.0px;top:93.2px;font-size:42.01px;color:#4a86ad;font-weight:700;letter-spacing:-2.500px;transform:scaleX(0.8756);transform-origin:0 0;">ANNEX</div>
<div class="t" style="left:184.0px;top:93.2px;font-size:42.01px;color:#58595b;font-weight:700;font-style:italic;letter-spacing:0.000px;transform:scaleX(0.7827);transform-origin:0 0;">Trades</div>
<div class="t" style="left:292.5px;top:96.6px;font-size:11.05px;color:#4a86ad;letter-spacing:0.000px;transform:scaleX(0.8464);transform-origin:0 0;">TM</div>
<div class="a" style="left:470.5px;top:100.5px;width:33px;height:33px;background:#e57f3b;border-radius:50%;"></div>
<svg class="a" style="left:477px;top:107px;" width="20" height="20" viewBox="0 0 20 20"><path d="M10 3.5 V16.5 M3.5 10 H16.5" stroke="#fff" stroke-width="2.6" stroke-linecap="round"/></svg>
<div class="a" style="left:0px;top:158px;width:528px;height:2px;background:#dde0e3;"></div>
<div class="a" style="left:23px;top:177px;width:480px;height:74px;background:#f2f2f2;border-radius:13px;"></div>
<svg class="a" style="left:52px;top:201px;" width="26" height="26" viewBox="0 0 26 26"><circle cx="11" cy="11.4" r="8.2" fill="none" stroke="#8b8b8b" stroke-width="1.6"/><path d="M17 17.3 L21.8 22.2" stroke="#8b8b8b" stroke-width="1.8" stroke-linecap="round"/></svg>
<div class="t" style="left:85.5px;top:203.9px;font-size:20.64px;color:#8b8b8b;letter-spacing:-0.638px;">Search...</div>
<svg class="a" style="left:23px;top:274px;" width="60" height="60" viewBox="0 0 60 60"><defs><clipPath id="cm"><circle cx="30" cy="30" r="30"/></clipPath><filter id="am"><feGaussianBlur stdDeviation="0.6"/></filter></defs><g clip-path="url(#cm)"><g filter="url(#am)"><rect width="60" height="60" fill="#7e8486"/><rect width="60" height="16" fill="#2e3133"/><rect x="0" y="14" width="20" height="24" fill="#3c4144"/><rect x="0" y="34" width="24" height="5" fill="#cfd4d4"/><rect x="0" y="39" width="28" height="21" fill="#a2a5a6"/><rect x="42" y="14" width="18" height="4" fill="#e8ecec"/><rect x="42" y="18" width="18" height="14" fill="#cdd3d4"/><rect x="44" y="32" width="16" height="20" fill="#2f3a3e"/><rect x="47" y="36" width="8" height="8" fill="#c8d0d2"/><path d="M18 13 Q22 6 32 7 Q42 8 45 16 L44 24 Q36 16 20 20Z" fill="#6e4a34"/><path d="M19 19 Q30 14 43 21 L45 32 Q44 40 38 44 Q30 50 24 46 Q18 40 19 30Z" fill="#d9a48c"/><ellipse cx="45" cy="31" rx="3" ry="4.5" fill="#c88f78"/><path d="M27 46 Q34 46 40 42 L43 60 L22 60 Z" fill="#c4907a"/><path d="M8 60 Q14 52 24 54 L33 59 Q42 53 52 56 L52 60Z" fill="#164a55"/><path d="M21 25 L27 24 M32 23 L38 22" stroke="#5a3a2a" stroke-width="1.2"/><circle cx="24" cy="27.5" r="1.4" fill="#2a3a4a"/><circle cx="35" cy="26" r="1.4" fill="#2a3a4a"/><path d="M26 37 Q30 36 33 37" stroke="#9a5a4a" stroke-width="1.3" fill="none"/></g></g></svg>
<div class="t" style="left:99.0px;top:283.5px;font-size:24.71px;color:#0d0d0d;letter-spacing:1.110px;-webkit-text-stroke:0.45px #0d0d0d;">Kadin Septimus</div>
<div class="t" style="left:98.5px;top:316.1px;font-size:14.24px;color:#8e98a8;letter-spacing:1.130px;">yesterday</div>
<div class="a" style="left:468.4000000000001px;top:297.9px;width:7.2px;height:7.2px;background:#37474f;border-radius:50%;"></div>
<div class="a" style="left:482.4000000000001px;top:297.9px;width:7.2px;height:7.2px;background:#37474f;border-radius:50%;"></div>
<div class="a" style="left:496.4000000000001px;top:297.9px;width:7.2px;height:7.2px;background:#37474f;border-radius:50%;"></div>
<div class="t" style="left:23.0px;top:355.8px;font-size:20.35px;color:#141414;letter-spacing:0.743px;">Jorem ipsum dolor sit amet, consectetur</div>
<div class="t" style="left:23.0px;top:384.3px;font-size:20.35px;color:#141414;letter-spacing:0.585px;">adipiscing elit. Etiam eu turpis molestie</div>
<div class="t" style="left:23.0px;top:412.8px;font-size:20.35px;color:#141414;letter-spacing:0.450px;">est a, mattis tellus.</div>
<div class="t" style="left:23.0px;top:456.2px;font-size:19.33px;color:#4a86ad;font-weight:700;letter-spacing:0.000px;transform:scaleX(1.1215);transform-origin:0 0;">#hastag1</div>
<div class="t" style="left:137.0px;top:456.2px;font-size:19.33px;color:#4a86ad;font-weight:700;letter-spacing:0.000px;transform:scaleX(1.1693);transform-origin:0 0;">#hastag2</div>
<div class="t" style="left:256.0px;top:456.2px;font-size:19.33px;color:#4a86ad;font-weight:700;letter-spacing:0.000px;transform:scaleX(1.1573);transform-origin:0 0;">#hastag3</div>
<svg class="a" style="left:24px;top:494px;" width="28" height="28" viewBox="0 0 28 28"><circle cx="14" cy="14.5" r="8" fill="#4a86ad"/><path d="M11 19 H17 L16.5 22.5 H11.5Z" fill="#4a86ad"/><rect x="10" y="24" width="8" height="2.6" rx="1.3" fill="#4a86ad"/><path d="M11.5 12 L14 15 L16.5 12 M14 15 V20" fill="none" stroke="#fff" stroke-width="1.6"/><path d="M6 5 L3.5 4 M9.5 2.5 L8.3 0.5 M18.5 2.5 L19.7 0.5 M22 5 L24.5 4" stroke="#4a86ad" stroke-width="2" stroke-linecap="round"/></svg>
<div class="t" style="left:61.0px;top:497.8px;font-size:20.35px;color:#8a8f99;letter-spacing:0.000px;transform:scaleX(0.8247);transform-origin:0 0;">125</div>
<svg class="a" style="left:119px;top:495px;" width="26" height="26" viewBox="0 0 26 26"><path d="M12.5 1 Q24 1 24.5 12 L24.5 22 Q24.5 25 21.5 25 L12.5 25 A12 12 0 0 1 12.5 1Z" fill="#4a86ad"/><path d="M7.5 8.3 H14 M7.5 12.8 H17.5 M7.5 17.3 H17.5" stroke="#fff" stroke-width="2.2" stroke-linecap="round"/></svg>
<div class="t" style="left:155.0px;top:497.8px;font-size:20.35px;color:#8a8f99;letter-spacing:0.000px;transform:scaleX(0.7952);transform-origin:0 0;">7</div>
<svg class="a" style="left:191px;top:494px;" width="31" height="28" viewBox="0 0 31 28"><path d="M7.5 4 Q7.5 1.5 10 1.5 L21 1.5 Q23.5 1.5 23.5 4 L23.5 18 L7.5 18 Z" fill="#4a86ad"/><path d="M1.5 9 Q1.5 7.5 3.5 8 L3.5 18 Q3.5 20.5 6 20.5 L25 20.5 Q27.5 20.5 27.5 18 L27.5 8 Q29.5 7.5 29.5 9 L29.5 22 Q29.5 26 25.5 26 L5.5 26 Q1.5 26 1.5 22Z" fill="#4a86ad"/><path d="M11.5 9 L14.5 12 L19.5 7" fill="none" stroke="#fff" stroke-width="2" stroke-linecap="round" stroke-linejoin="round"/></svg>
<div class="t" style="left:231.3px;top:497.8px;font-size:20.35px;color:#8a8f99;letter-spacing:0.000px;transform:scaleX(0.6627);transform-origin:0 0;">12</div>
<svg class="a" style="left:413px;top:493px;" width="26" height="26" viewBox="0 0 26 26"><path d="M10.5 9.5 H6 Q3 9.5 3 12.5 L3 21.5 Q3 24 5.5 24 L14 24 Q16.5 24 16.5 21.5 L16.5 19" fill="none" stroke="#4a86ad" stroke-width="2.8" stroke-linecap="round"/><path d="M9 17 Q9 9.5 16.5 9 L21 9" fill="none" stroke="#4a86ad" stroke-width="2.8" stroke-linecap="round"/><path d="M18 3.5 L23.5 9 L18 14.5" fill="none" stroke="#4a86ad" stroke-width="2.8" stroke-linecap="round" stroke-linejoin="round"/></svg>
<div class="t" style="left:448.6px;top:498.0px;font-size:19.62px;color:#8a919b;letter-spacing:0.409px;">Share</div>
<div class="a" style="left:0px;top:545.5px;width:528px;height:2px;background:#e3e5e7;"></div>
<svg class="a" style="left:23px;top:573px;" width="60" height="60" viewBox="0 0 60 60"><defs><clipPath id="cw"><circle cx="30" cy="30" r="30"/></clipPath><filter id="aw"><feGaussianBlur stdDeviation="0.6"/></filter></defs><g clip-path="url(#cw)"><g filter="url(#aw)"><rect width="60" height="60" fill="#a8642a"/><ellipse cx="17" cy="6" rx="6" ry="4" fill="#e88a3a"/><ellipse cx="27" cy="5" rx="5" ry="4" fill="#f4e0c0"/><ellipse cx="12" cy="14" rx="5" ry="4" fill="#f0c060"/><ellipse cx="27" cy="13" rx="5" ry="4" fill="#e8a070"/><ellipse cx="27" cy="21" rx="5" ry="4" fill="#e0783a"/><ellipse cx="28" cy="28" rx="4" ry="4" fill="#f0d8a0"/><rect x="30" y="0" width="13" height="42" fill="#140a05"/><rect x="43" y="0" width="4" height="36" fill="#f08a20"/><ellipse cx="52" cy="12" rx="6" ry="3.5" fill="#f2dcc0"/><ellipse cx="52" cy="20" rx="6" ry="3.5" fill="#e87a30"/><ellipse cx="52" cy="28" rx="6" ry="3.5" fill="#f0b890"/><ellipse cx="52" cy="35" rx="6" ry="3.5" fill="#e8703a"/><path d="M40 40 Q50 36 56 44 L60 60 L44 60Z" fill="#5a3a1a"/><path d="M46 50 L60 48 L60 60 L46 60Z" fill="#151010"/><path d="M2 26 Q6 12 18 12 Q28 14 32 26 L48 60 L8 60 Q1 45 2 26Z" fill="#2a1a0e"/><path d="M8 28 Q10 16 19 17 Q28 19 28 30 Q27 42 18 45 Q10 44 8 34Z" fill="#b67a52"/><path d="M12 35 Q18 38 24 34 Q22 39 17 39 Q13 38 12 35Z" fill="#f6f2ec"/><path d="M12 27 L16 27 M21 26 L25 26" stroke="#2a1a10" stroke-width="1.2"/><path d="M24 26 Q34 40 44 60 L36 60 Q30 46 22 36Z" fill="#3c2614"/><path d="M27 30 Q35 44 40 60" stroke="#6a4a30" stroke-width="1" fill="none"/></g></g></svg>
<div class="t" style="left:99.0px;top:582.6px;font-size:24.71px;color:#0d0d0d;letter-spacing:1.121px;-webkit-text-stroke:0.45px #0d0d0d;">Madelyn Bergson</div>
<div class="t" style="left:98.5px;top:614.9px;font-size:14.24px;color:#8e98a8;letter-spacing:0.821px;">just now</div>
<div class="a" style="left:468.4000000000001px;top:596.4000000000001px;width:7.2px;height:7.2px;background:#37474f;border-radius:50%;"></div>
<div class="a" style="left:482.4000000000001px;top:596.4000000000001px;width:7.2px;height:7.2px;background:#37474f;border-radius:50%;"></div>
<div class="a" style="left:496.4000000000001px;top:596.4000000000001px;width:7.2px;height:7.2px;background:#37474f;border-radius:50%;"></div>
<div class="t" style="left:23.0px;top:653.8px;font-size:20.35px;color:#141414;letter-spacing:0.743px;">Jorem ipsum dolor sit amet, consectetur</div>
<div class="t" style="left:23.0px;top:682.3px;font-size:20.35px;color:#141414;letter-spacing:0.585px;">adipiscing elit. Etiam eu turpis molestie</div>
<div class="t" style="left:402.5px;top:682.3px;font-size:20.35px;color:#4a86ad;font-weight:700;letter-spacing:0.000px;transform:scaleX(1.0450);transform-origin:0 0;">more</div>
<div class="t" style="left:23.0px;top:727.6px;font-size:19.33px;color:#4a86ad;font-weight:700;letter-spacing:0.000px;transform:scaleX(1.1215);transform-origin:0 0;">#hastag1</div>
<div class="t" style="left:137.0px;top:727.6px;font-size:19.33px;color:#4a86ad;font-weight:700;letter-spacing:0.000px;transform:scaleX(1.1693);transform-origin:0 0;">#hastag2</div>
<div class="t" style="left:256.0px;top:727.6px;font-size:19.33px;color:#4a86ad;font-weight:700;letter-spacing:0.000px;transform:scaleX(1.1573);transform-origin:0 0;">#hastag3</div>
<div class="a" style="left:23px;top:781px;width:481px;height:400px;border-radius:7px;overflow:hidden;background:#03061a;"><svg width="481" height="400" viewBox="0 0 481 400" style="position:absolute;left:0;top:0;"><defs><filter id="b10" x="-50%" y="-50%" width="200%" height="200%"><feGaussianBlur stdDeviation="9"/></filter><filter id="b5" x="-50%" y="-50%" width="200%" height="200%"><feGaussianBlur stdDeviation="5"/></filter><filter id="b2" x="-50%" y="-50%" width="200%" height="200%"><feGaussianBlur stdDeviation="2"/></filter><filter id="b1" x="-50%" y="-50%" width="200%" height="200%"><feGaussianBlur stdDeviation="0.8"/></filter><filter id="tex" x="0" y="0" width="100%" height="100%"><feTurbulence type="fractalNoise" baseFrequency="0.11" numOctaves="2" seed="5"/><feColorMatrix values="0 0 0 0 0.85  0 0 0 0 0.93  0 0 0 0 1  0 0 0 2.4 -1.05"/></filter><mask id="gmask" maskUnits="userSpaceOnUse" x="0" y="0" width="481" height="400"><path d="M-10 380 L-10 268 Q20 210 50 165 Q90 120 115 100 Q140 70 154 60 L190 48 Q200 110 172 165 Q150 210 141 242 Q170 290 193 320 L167 380 Z" fill="#fff" filter="url(#b5)"/></mask></defs><g filter="url(#b10)"><path d="M187 62 Q300 20 481 10 L481 268 Q380 275 300 240 Q220 190 187 62Z" fill="#13263a"/><ellipse cx="165" cy="165" rx="55" ry="85" fill="#6e6a7e" transform="rotate(-15 165 165)"/><ellipse cx="205" cy="250" rx="70" ry="38" fill="#9a7a66"/><path d="M270 262 Q380 256 481 262 L481 296 Q380 300 270 294Z" fill="#c48c3c"/><rect x="257" y="296" width="224" height="80" fill="#040407"/><ellipse cx="380" cy="350" rx="36" ry="22" fill="#4e4220"/><ellipse cx="205" cy="335" rx="55" ry="40" fill="#163a8a"/><ellipse cx="225" cy="205" rx="40" ry="35" fill="#4a5068"/></g><g mask="url(#gmask)"><rect x="0" y="40" width="200" height="340" fill="#3f8fe4"/><g filter="url(#b10)"><ellipse cx="90" cy="290" rx="70" ry="60" fill="#82c0f6"/><ellipse cx="150" cy="120" rx="30" ry="50" fill="#78b8f0"/></g><rect x="0" y="40" width="200" height="340" filter="url(#tex)" opacity="0.5"/><g stroke="#d8f0ff" stroke-width="1" opacity="0.28" fill="none"><path d="M20 369 L90 200 M40 369 L120 190 M70 369 L140 200 M100 369 L160 230 M10 300 L70 160 M50 250 L130 110 M90 200 L160 70"/></g></g><g filter="url(#b5)"><path d="M125 0 L175 0 Q190 25 212 32 Q250 18 300 6 L365 0 L370 6 Q300 26 240 42 Q210 55 196 48 Q160 38 125 0Z" fill="#3a90ea"/><ellipse cx="92" cy="68" rx="58" ry="13" fill="#2f7ee0" transform="rotate(-24 92 68)"/><ellipse cx="28" cy="165" rx="45" ry="11" fill="#2f7ee0" transform="rotate(-40 28 165)"/><ellipse cx="70" cy="120" rx="35" ry="9" fill="#2a6cd0" transform="rotate(-30 70 120)"/><path d="M340 5 Q380 -5 425 5 Q445 60 435 112 Q400 100 378 82 Q352 48 340 5Z" fill="#1c2ad8"/><path d="M365 165 Q430 160 481 172 L481 255 Q440 252 405 230 Q372 200 365 165Z" fill="#2442e2"/><path d="M192 112 Q225 90 300 150 Q315 165 308 168 Q260 140 222 122 Q195 118 192 112Z" fill="#7cc0ec" opacity="0.8"/></g><g filter="url(#b2)"><path d="M302 8 Q330 110 378 242" stroke="#6aaee0" stroke-width="6" fill="none"/><path d="M342 139 Q420 145 481 162" stroke="#c4e6fa" stroke-width="9" fill="none"/></g><g filter="url(#b1)" fill="none" stroke="#b8e0ff" stroke-width="1.6" opacity="0.85"><path d="M300 190 Q275 210 270 240 Q262 270 250 300 Q235 330 210 369"/><path d="M325 250 Q345 220 380 215 Q430 200 481 140"/><path d="M190 369 Q250 330 300 300 Q340 270 360 240"/><path d="M150 90 Q160 130 165 170 Q160 200 150 230"/><path d="M481 40 Q420 110 390 170"/></g><g fill="#ffd8e8" filter="url(#b1)"><ellipse cx="187" cy="149" rx="2.5" ry="8"/><ellipse cx="126" cy="232" rx="2.5" ry="6"/><ellipse cx="213" cy="266" rx="2.5" ry="6"/><ellipse cx="336" cy="342" rx="4" ry="7"/><ellipse cx="316" cy="128" rx="4" ry="4" fill="#ffc890"/><ellipse cx="371" cy="243" rx="4" ry="5"/><ellipse cx="332" cy="272" rx="3" ry="5" fill="#ffd060"/><ellipse cx="447" cy="150" rx="4" ry="4"/><ellipse cx="80" cy="237" rx="2" ry="7"/><ellipse cx="263" cy="283" rx="4" ry="3"/><ellipse cx="190" cy="305" rx="2" ry="5"/><ellipse cx="315" cy="162" rx="3" ry="3"/></g></svg></div>
<svg class="a" style="left:236px;top:1101px;" width="60" height="60" viewBox="0 0 60 60"><path d="M9 11 Q9 4 15.5 7.5 L45 24 Q51 27.5 45 31 L15.5 47.5 Q9 51 9 44 Z" fill="#fff"/></svg>
<div class="a" style="left:334.5px;top:324px;width:168.5px;height:100.5px;background:#fff;border-radius:7px;box-shadow:0 3px 14px rgba(0,0,0,0.13);"></div>
<svg class="a" style="left:351px;top:347px;" width="23" height="23" viewBox="0 0 23 23"><path d="M11.5 2 V21 M2 11.5 H21" stroke="#111" stroke-width="1.6"/></svg>
<div class="t" style="left:388.6px;top:348.2px;font-size:20.64px;color:#111111;letter-spacing:-0.249px;">Follow</div>
<svg class="a" style="left:350px;top:383px;" width="24" height="24" viewBox="0 0 24 24"><path d="M19.5 9 A9.3 9.3 0 1 1 14.5 2.9" fill="none" stroke="#111" stroke-width="1.6"/><path d="M17.5 1.5 V8.5 M14 5 H21" stroke="#111" stroke-width="1.5"/><circle cx="11.5" cy="9.5" r="2.6" fill="none" stroke="#111" stroke-width="1.5"/><path d="M6.5 17.5 Q11.5 13 16.5 17.5" fill="none" stroke="#111" stroke-width="1.5"/></svg>
<div class="t" style="left:388.6px;top:384.1px;font-size:20.64px;color:#111111;letter-spacing:0.754px;">Connect</div>
</div>
<div class="a" style="left:382px;top:1744px;width:2176px;height:158px;border-radius:42px;background:linear-gradient(90deg,#232b23 0%,#252b22 30%,#28261f 50%,#2a2720 62%,#262d25 78%,#27302a 100%);box-shadow:inset 0 0 0 1.5px rgba(200,210,200,0.22);"></div>
<svg class="a" style="left:405px;top:1766px;" width="103" height="103" viewBox="0 0 100 100"><defs><linearGradient id="fb" x1="0" y1="0" x2="0" y2="1"><stop offset="0" stop-color="#5fc3f7"/><stop offset="1" stop-color="#2e6fe6"/></linearGradient><linearGradient id="fw" x1="0" y1="0" x2="0" y2="1"><stop offset="0" stop-color="#f4f4f6"/><stop offset="1" stop-color="#d6dbe6"/></linearGradient><clipPath id="fc"><rect width="100" height="100" rx="23"/></clipPath></defs><g clip-path="url(#fc)"><rect width="100" height="100" fill="url(#fw)"/><path d="M0 0 H56 Q44 30 43 58 L53 58 Q52 80 57 100 H0Z" fill="url(#fb)"/></g><rect x="26" y="33" width="4" height="10" rx="2" fill="#1d1d1f"/><rect x="73" y="33" width="4" height="10" rx="2" fill="#1d1d1f"/><path d="M20 71 Q50 88 81 71" fill="none" stroke="#1d1d1f" stroke-width="3.5" stroke-linecap="round"/></svg>
<svg class="a" style="left:540.5px;top:1766px;" width="103" height="103" viewBox="0 0 100 100"><rect width="100" height="100" rx="23" fill="#b8bab7"/><rect x="17" y="17" width="18" height="18" rx="5" fill="#6cd65a"/><rect x="42" y="17" width="18" height="18" rx="5" fill="#f9c73a"/><rect x="67" y="17" width="18" height="18" rx="5" fill="#f08d2a"/><rect x="17" y="42" width="18" height="18" rx="5" fill="#d93a2a"/><rect x="42" y="42" width="18" height="18" rx="5" fill="#c4c8cc"/><rect x="67" y="42" width="18" height="18" rx="5" fill="#e94a5e"/><rect x="17" y="67" width="18" height="18" rx="5" fill="#8a44d6"/><rect x="42" y="67" width="18" height="18" rx="5" fill="#3a9af0"/><rect x="67" y="67" width="18" height="18" rx="5" fill="#52c8a0"/></svg>
<svg class="a" style="left:677px;top:1766px;" width="103" height="103" viewBox="0 0 100 100"><defs><clipPath id="cc"><rect width="100" height="100" rx="23"/></clipPath></defs><g clip-path="url(#cc)"><rect width="100" height="100" fill="#f6f6f6"/><rect width="100" height="31" fill="#e35e51"/></g><text x="50" y="24" text-anchor="middle" font-family="Liberation Sans" font-weight="700" font-size="19" fill="#fff">OCT</text><text x="50" y="85" text-anchor="middle" font-family="Liberation Sans" font-size="63" fill="#262626" transform="translate(50 0) scale(0.86 1) translate(-50 0)">10</text></svg>
<svg class="a" style="left:812.5px;top:1766px;" width="103" height="103" viewBox="0 0 100 100"><defs><clipPath id="nc"><rect width="100" height="100" rx="23"/></clipPath><linearGradient id="ng" x1="0" y1="0" x2="0" y2="1"><stop offset="0" stop-color="#fbdf6e"/><stop offset="1" stop-color="#f5c53e"/></linearGradient></defs><g clip-path="url(#nc)"><rect width="100" height="100" fill="#efedea"/><rect width="100" height="26" fill="url(#ng)"/><path d="M0 31 H100" stroke="#c8c8c8" stroke-width="1.2" stroke-dasharray="1.5 3"/><path d="M0 50 H100 M0 75 H100" stroke="#d6d4d6" stroke-width="1.2"/></g></svg>
<svg class="a" style="left:948px;top:1766px;" width="103" height="103" viewBox="0 0 100 100"><defs><linearGradient id="sg" x1="0" y1="0" x2="0" y2="1"><stop offset="0" stop-color="#dfe8ec"/><stop offset="0.5" stop-color="#b9bdc0"/><stop offset="1" stop-color="#8c8d8d"/></linearGradient></defs><rect width="100" height="100" rx="23" fill="url(#sg)"/><circle cx="50" cy="50" r="44" fill="#343436"/><rect x="49.2" y="7" width="1.6" height="7" fill="#a8a8aa" transform="rotate(0 50 50)"/><rect x="49.2" y="7" width="1.6" height="7" fill="#a8a8aa" transform="rotate(6 50 50)"/><rect x="49.2" y="7" width="1.6" height="7" fill="#a8a8aa" transform="rotate(12 50 50)"/><rect x="49.2" y="7" width="1.6" height="7" fill="#a8a8aa" transform="rotate(18 50 50)"/><rect x="49.2" y="7" width="1.6" height="7" fill="#a8a8aa" transform="rotate(24 50 50)"/><rect x="49.2" y="7" width="1.6" height="7" fill="#a8a8aa" transform="rotate(30 50 50)"/><rect x="49.2" y="7" width="1.6" height="7" fill="#a8a8aa" transform="rotate(36 50 50)"/><rect x="49.2" y="7" width="1.6" height="7" fill="#a8a8aa" transform="rotate(42 50 50)"/><rect x="49.2" y="7" width="1.6" height="7" fill="#a8a8aa" transform="rotate(48 50 50)"/><rect x="49.2" y="7" width="1.6" height="7" fill="#a8a8aa" transform="rotate(54 50 50)"/><rect x="49.2" y="7" width="1.6" height="7" fill="#a8a8aa" transform="rotate(60 50 50)"/><rect x="49.2" y="7" width="1.6" height="7" fill="#a8a8aa" transform="rotate(66 50 50)"/><rect x="49.2" y="7" width="1.6" height="7" fill="#a8a8aa" transform="rotate(72 50 50)"/><rect x="49.2" y="7" width="1.6" height="7" fill="#a8a8aa" transform="rotate(78 50 50)"/><rect x="49.2" y="7" width="1.6" height="7" fill="#a8a8aa" transform="rotate(84 50 50)"/><rect x="49.2" y="7" width="1.6" height="7" fill="#a8a8aa" transform="rotate(90 50 50)"/><rect x="49.2" y="7" width="1.6" height="7" fill="#a8a8aa" transform="rotate(96 50 50)"/><rect x="49.2" y="7" width="1.6" height="7" fill="#a8a8aa" transform="rotate(102 50 50)"/><rect x="49.2" y="7" width="1.6" height="7" fill="#a8a8aa" transform="rotate(108 50 50)"/><rect x="49.2" y="7" width="1.6" height="7" fill="#a8a8aa" transform="rotate(114 50 50)"/><rect x="49.2" y="7" width="1.6" height="7" fill="#a8a8aa" transform="rotate(120 50 50)"/><rect x="49.2" y="7" width="1.6" height="7" fill="#a8a8aa" transform="rotate(126 50 50)"/><rect x="49.2" y="7" width="1.6" height="7" fill="#a8a8aa" transform="rotate(132 50 50)"/><rect x="49.2" y="7" width="1.6" height="7" fill="#a8a8aa" transform="rotate(138 50 50)"/><rect x="49.2" y="7" width="1.6" height="7" fill="#a8a8aa" transform="rotate(144 50 50)"/><rect x="49.2" y="7" width="1.6" height="7" fill="#a8a8aa" transform="rotate(150 50 50)"/><rect x="49.2" y="7" width="1.6" height="7" fill="#a8a8aa" transform="rotate(156 50 50)"/><rect x="49.2" y="7" width="1.6" height="7" fill="#a8a8aa" transform="rotate(162 50 50)"/><rect x="49.2" y="7" width="1.6" height="7" fill="#a8a8aa" transform="rotate(168 50 50)"/><rect x="49.2" y="7" width="1.6" height="7" fill="#a8a8aa" transform="rotate(174 50 50)"/><rect x="49.2" y="7" width="1.6" height="7" fill="#a8a8aa" transform="rotate(180 50 50)"/><rect x="49.2" y="7" width="1.6" height="7" fill="#a8a8aa" transform="rotate(186 50 50)"/><rect x="49.2" y="7" width="1.6" height="7" fill="#a8a8aa" transform="rotate(192 50 50)"/><rect x="49.2" y="7" width="1.6" height="7" fill="#a8a8aa" transform="rotate(198 50 50)"/><rect x="49.2" y="7" width="1.6" height="7" fill="#a8a8aa" transform="rotate(204 50 50)"/><rect x="49.2" y="7" width="1.6" height="7" fill="#a8a8aa" transform="rotate(210 50 50)"/><rect x="49.2" y="7" width="1.6" height="7" fill="#a8a8aa" transform="rotate(216 50 50)"/><rect x="49.2" y="7" width="1.6" height="7" fill="#a8a8aa" transform="rotate(222 50 50)"/><rect x="49.2" y="7" width="1.6" height="7" fill="#a8a8aa" transform="rotate(228 50 50)"/><rect x="49.2" y="7" width="1.6" height="7" fill="#a8a8aa" transform="rotate(234 50 50)"/><rect x="49.2" y="7" width="1.6" height="7" fill="#a8a8aa" transform="rotate(240 50 50)"/><rect x="49.2" y="7" width="1.6" height="7" fill="#a8a8aa" transform="rotate(246 50 50)"/><rect x="49.2" y="7" width="1.6" height="7" fill="#a8a8aa" transform="rotate(252 50 50)"/><rect x="49.2" y="7" width="1.6" height="7" fill="#a8a8aa" transform="rotate(258 50 50)"/><rect x="49.2" y="7" width="1.6" height="7" fill="#a8a8aa" transform="rotate(264 50 50)"/><rect x="49.2" y="7" width="1.6" height="7" fill="#a8a8aa" transform="rotate(270 50 50)"/><rect x="49.2" y="7" width="1.6" height="7" fill="#a8a8aa" transform="rotate(276 50 50)"/><rect x="49.2" y="7" width="1.6" height="7" fill="#a8a8aa" transform="rotate(282 50 50)"/><rect x="49.2" y="7" width="1.6" height="7" fill="#a8a8aa" transform="rotate(288 50 50)"/><rect x="49.2" y="7" width="1.6" height="7" fill="#a8a8aa" transform="rotate(294 50 50)"/><rect x="49.2" y="7" width="1.6" height="7" fill="#a8a8aa" transform="rotate(300 50 50)"/><rect x="49.2" y="7" width="1.6" height="7" fill="#a8a8aa" transform="rotate(306 50 50)"/><rect x="49.2" y="7" width="1.6" height="7" fill="#a8a8aa" transform="rotate(312 50 50)"/><rect x="49.2" y="7" width="1.6" height="7" fill="#a8a8aa" transform="rotate(318 50 50)"/><rect x="49.2" y="7" width="1.6" height="7" fill="#a8a8aa" transform="rotate(324 50 50)"/><rect x="49.2" y="7" width="1.6" height="7" fill="#a8a8aa" transform="rotate(330 50 50)"/><rect x="49.2" y="7" width="1.6" height="7" fill="#a8a8aa" transform="rotate(336 50 50)"/><rect x="49.2" y="7" width="1.6" height="7" fill="#a8a8aa" transform="rotate(342 50 50)"/><rect x="49.2" y="7" width="1.6" height="7" fill="#a8a8aa" transform="rotate(348 50 50)"/><rect x="49.2" y="7" width="1.6" height="7" fill="#a8a8aa" transform="rotate(354 50 50)"/><circle cx="50" cy="50" r="35" fill="#737375"/><circle cx="50" cy="50" r="31" fill="#2e2e30"/><rect x="49.3" y="20" width="1.4" height="5" fill="#8e8e90" transform="rotate(0 50 50)"/><rect x="49.3" y="20" width="1.4" height="5" fill="#8e8e90" transform="rotate(9 50 50)"/><rect x="49.3" y="20" width="1.4" height="5" fill="#8e8e90" transform="rotate(18 50 50)"/><rect x="49.3" y="20" width="1.4" height="5" fill="#8e8e90" transform="rotate(27 50 50)"/><rect x="49.3" y="20" width="1.4" height="5" fill="#8e8e90" transform="rotate(36 50 50)"/><rect x="49.3" y="20" width="1.4" height="5" fill="#8e8e90" transform="rotate(45 50 50)"/><rect x="49.3" y="20" width="1.4" height="5" fill="#8e8e90" transform="rotate(54 50 50)"/><rect x="49.3" y="20" width="1.4" height="5" fill="#8e8e90" transform="rotate(63 50 50)"/><rect x="49.3" y="20" width="1.4" height="5" fill="#8e8e90" transform="rotate(72 50 50)"/><rect x="49.3" y="20" width="1.4" height="5" fill="#8e8e90" transform="rotate(81 50 50)"/><rect x="49.3" y="20" width="1.4" height="5" fill="#8e8e90" transform="rotate(90 50 50)"/><rect x="49.3" y="20" width="1.4" height="5" fill="#8e8e90" transform="rotate(99 50 50)"/><rect x="49.3" y="20" width="1.4" height="5" fill="#8e8e90" transform="rotate(108 50 50)"/><rect x="49.3" y="20" width="1.4" height="5" fill="#8e8e90" transform="rotate(117 50 50)"/><rect x="49.3" y="20" width="1.4" height="5" fill="#8e8e90" transform="rotate(126 50 50)"/><rect x="49.3" y="20" width="1.4" height="5" fill="#8e8e90" transform="rotate(135 50 50)"/><rect x="49.3" y="20" width="1.4" height="5" fill="#8e8e90" transform="rotate(144 50 50)"/><rect x="49.3" y="20" width="1.4" height="5" fill="#8e8e90" transform="rotate(153 50 50)"/><rect x="49.3" y="20" width="1.4" height="5" fill="#8e8e90" transform="rotate(162 50 50)"/><rect x="49.3" y="20" width="1.4" height="5" fill="#8e8e90" transform="rotate(171 50 50)"/><rect x="49.3" y="20" width="1.4" height="5" fill="#8e8e90" transform="rotate(180 50 50)"/><rect x="49.3" y="20" width="1.4" height="5" fill="#8e8e90" transform="rotate(189 50 50)"/><rect x="49.3" y="20" width="1.4" height="5" fill="#8e8e90" transform="rotate(198 50 50)"/><rect x="49.3" y="20" width="1.4" height="5" fill="#8e8e90" transform="rotate(207 50 50)"/><rect x="49.3" y="20" width="1.4" height="5" fill="#8e8e90" transform="rotate(216 50 50)"/><rect x="49.3" y="20" width="1.4" height="5" fill="#8e8e90" transform="rotate(225 50 50)"/><rect x="49.3" y="20" width="1.4" height="5" fill="#8e8e90" transform="rotate(234 50 50)"/><rect x="49.3" y="20" width="1.4" height="5" fill="#8e8e90" transform="rotate(243 50 50)"/><rect x="49.3" y="20" width="1.4" height="5" fill="#8e8e90" transform="rotate(252 50 50)"/><rect x="49.3" y="20" width="1.4" height="5" fill="#8e8e90" transform="rotate(261 50 50)"/><rect x="49.3" y="20" width="1.4" height="5" fill="#8e8e90" transform="rotate(270 50 50)"/><rect x="49.3" y="20" width="1.4" height="5" fill="#8e8e90" transform="rotate(279 50 50)"/><rect x="49.3" y="20" width="1.4" height="5" fill="#8e8e90" transform="rotate(288 50 50)"/><rect x="49.3" y="20" width="1.4" height="5" fill="#8e8e90" transform="rotate(297 50 50)"/><rect x="49.3" y="20" width="1.4" height="5" fill="#8e8e90" transform="rotate(306 50 50)"/><rect x="49.3" y="20" width="1.4" height="5" fill="#8e8e90" transform="rotate(315 50 50)"/><rect x="49.3" y="20" width="1.4" height="5" fill="#8e8e90" transform="rotate(324 50 50)"/><rect x="49.3" y="20" width="1.4" height="5" fill="#8e8e90" transform="rotate(333 50 50)"/><rect x="49.3" y="20" width="1.4" height="5" fill="#8e8e90" transform="rotate(342 50 50)"/><rect x="49.3" y="20" width="1.4" height="5" fill="#8e8e90" transform="rotate(351 50 50)"/><circle cx="50" cy="50" r="19" fill="#5e5e60"/><path d="M50 50 L50 19 M50 50 L76.8 65.5 M50 50 L23.2 65.5" stroke="#a6a6a8" stroke-width="4.5" stroke-linecap="round"/><circle cx="50" cy="50" r="3.5" fill="#a6a6a8"/></svg>
<svg class="a" style="left:1085px;top:1766px;" width="103" height="103" viewBox="0 0 100 100"><rect width="100" height="100" rx="23" fill="#f2f2f0"/><circle cx="50" cy="50" r="43.5" fill="#3d9a4e"/><path d="M12.33 28.25 A43.5 43.5 0 0 1 87.67 28.25 L50 28.25 A21.75 21.75 0 0 0 31.16 60.875 Z" fill="#dd5040"/><path d="M87.67 28.25 A43.5 43.5 0 0 1 50 93.5 L68.84 60.875 A21.75 21.75 0 0 0 50 28.25 Z" fill="#f2bb42"/><circle cx="50" cy="50" r="21" fill="#fff"/><circle cx="50" cy="50" r="16.5" fill="#4a80e6"/></svg>
<svg class="a" style="left:1221px;top:1766px;" width="103" height="103" viewBox="0 0 100 100"><rect width="100" height="100" rx="23" fill="#fdfdfd"/><circle cx="70" cy="48" r="9" fill="#5ba85a"/><path d="M76 40 L80 36 M74 52 L82 53" stroke="#5ba85a" stroke-width="2"/><path d="M20 50 Q34 70 58 60" fill="none" stroke="#4a82e8" stroke-width="7" stroke-linecap="round"/><path d="M49 19 L27 78" stroke="#4f86ec" stroke-width="9" stroke-linecap="round"/><path d="M51 19 L73 78" stroke="#3a6fd8" stroke-width="9" stroke-linecap="round"/><path d="M27 78 L25 86 M73 78 L75 86" stroke="#4f86ec" stroke-width="3"/><path d="M50 12 V22" stroke="#4f86ec" stroke-width="5" stroke-linecap="round"/><circle cx="50" cy="26" r="7" fill="#fff" stroke="#1e1e1e" stroke-width="4"/></svg>
<svg class="a" style="left:1357px;top:1766px;" width="103" height="103" viewBox="0 0 100 100"><defs><linearGradient id="wg" x1="0" y1="0" x2="0" y2="1"><stop offset="0" stop-color="#84ea84"/><stop offset="1" stop-color="#58c25a"/></linearGradient></defs><rect width="100" height="100" rx="23" fill="url(#wg)"/><path d="M51 11 A38 38 0 1 1 31.5 82 L13 88 L19 70 A38 38 0 0 1 51 11Z" fill="#f4f4f4"/><path d="M51 17.5 A31.5 31.5 0 1 1 34 76 L22 79.5 L25.5 68 A31.5 31.5 0 0 1 51 17.5Z" fill="#62c862"/><path d="M37 33 Q32 36 33.5 42 Q37 55 48 64 Q59 72 67 69.5 Q72 67 70.5 62 L62.5 57.5 L57 61.5 Q49 57 44 49.5 L48.5 44 L44 34 Z" fill="#f4f4f4"/></svg>
<div class="a" style="left:1507px;top:1763px;width:2px;height:118px;background:rgba(210,215,210,0.35);"></div>
<svg class="a" style="left:1554.6px;top:1766px;" width="103" height="103" viewBox="0 0 100 100"><defs><linearGradient id="xg" x1="0" y1="0" x2="0" y2="1"><stop offset="0" stop-color="#3fb0f8"/><stop offset="1" stop-color="#1863e0"/></linearGradient></defs><rect width="100" height="100" rx="23" fill="url(#xg)"/><path d="M10 30 H90 M10 50 H90 M10 70 H90 M30 10 V90 M50 10 V90 M70 10 V90" stroke="#6ac4ff" stroke-width="0.8" opacity="0.6"/><path d="M60 40 L22 86 Q18 90 15 86 Q12 82 16 78 L54 34Z" fill="#2a2a2e"/><path d="M44 22 Q60 12 80 22 L88 36 L80 42 L72 34 L58 46 L48 36 Q52 28 44 22Z" fill="#3a3a40"/></svg>
<svg class="a" style="left:1690.5px;top:1766px;" width="103" height="103" viewBox="0 0 100 100"><defs><linearGradient id="ag" x1="0" y1="0" x2="0" y2="1"><stop offset="0" stop-color="#1ec8fa"/><stop offset="1" stop-color="#1a6be8"/></linearGradient></defs><rect width="100" height="100" rx="23" fill="url(#ag)"/><path d="M52 22 L28 78 M48 22 L72 78 M22 62 H78" stroke="#fff" stroke-width="7" stroke-linecap="round"/></svg>
<svg class="a" style="left:1826px;top:1766px;" width="103" height="103" viewBox="0 0 100 100"><defs><linearGradient id="mg" x1="0" y1="0" x2="0" y2="1"><stop offset="0" stop-color="#3aa8f8"/><stop offset="1" stop-color="#1a62e6"/></linearGradient></defs><rect width="100" height="100" rx="23" fill="url(#mg)"/><rect x="34" y="22" width="54" height="56" rx="8" fill="#8ac4f8" opacity="0.85"/><path d="M30 50 Q45 44 62 48 Q86 46 88 60 Q88 80 66 80 Q55 80 48 72 L30 72Z" fill="#d6e8fa"/><rect x="14" y="40" width="24" height="44" rx="6" fill="#e8f2fc"/></svg>
<div class="a" style="left:1975.5px;top:1763px;width:2px;height:118px;background:rgba(210,215,210,0.35);"></div>
<svg class="a" style="left:2035px;top:1758px;" width="82" height="120" viewBox="0 0 82 120"><path d="M10 4 H56 L76 24 V116 H10Z" fill="#f4f4f4"/><path d="M6 8 H52 L72 28 V118 H6Z" fill="#fafafa" stroke="#d0d0d0" stroke-width="0.8"/><path d="M52 8 V28 H72" fill="#e6e6e6" stroke="#d0d0d0" stroke-width="0.8"/><g fill="#9aa0a8"><rect x="12" y="40" width="40" height="3"/><rect x="12" y="48" width="54" height="1.5"/><rect x="12" y="52" width="54" height="1.5"/><rect x="12" y="56" width="50" height="1.5"/><rect x="12" y="62" width="54" height="1.5"/><rect x="12" y="66" width="48" height="1.5"/><rect x="12" y="72" width="54" height="1.5"/><rect x="12" y="76" width="40" height="1.5"/><rect x="12" y="100" width="54" height="1.5"/><rect x="12" y="106" width="30" height="1.5"/></g><text x="44" y="98" text-anchor="middle" font-family="Liberation Sans" font-size="16" fill="#888">HTML</text></svg>
<div class="a" style="left:2152px;top:1777px;width:120px;height:82px;background:#1e1e1e;border:1px solid #333;"></div>
<div class="a" style="left:2152px;top:1777px;width:26px;height:82px;background:#2a2a2a;"></div>
<div class="a" style="left:2182px;top:1785px;width:50px;height:2px;background:#777;opacity:0.6;"></div>
<div class="a" style="left:2182px;top:1794px;width:70px;height:2px;background:#777;opacity:0.6;"></div>
<div class="a" style="left:2182px;top:1803px;width:50px;height:2px;background:#777;opacity:0.6;"></div>
<div class="a" style="left:2182px;top:1812px;width:70px;height:2px;background:#777;opacity:0.6;"></div>
<div class="a" style="left:2182px;top:1821px;width:50px;height:2px;background:#777;opacity:0.6;"></div>
<div class="a" style="left:2182px;top:1830px;width:70px;height:2px;background:#777;opacity:0.6;"></div>
<div class="a" style="left:2182px;top:1839px;width:50px;height:2px;background:#777;opacity:0.6;"></div>
<div class="a" style="left:2182px;top:1848px;width:70px;height:2px;background:#777;opacity:0.6;"></div>
<svg class="a" style="left:2230px;top:1836px;" width="40" height="40" viewBox="0 0 100 100"><defs><clipPath id="nc2"><rect width="100" height="100" rx="23"/></clipPath></defs><g clip-path="url(#nc2)"><rect width="100" height="100" fill="#efedea"/><rect width="100" height="28" fill="#f7cf4a"/><path d="M0 52 H100 M0 76 H100" stroke="#d6d4d6" stroke-width="2"/></g></svg>
<div class="a" style="left:2287px;top:1784px;width:121px;height:68px;background:linear-gradient(180deg,#f4f2fb,#e6e2f6);"></div>
<div class="a" style="left:2287px;top:1784px;width:121px;height:5px;background:#2b1a12;"></div>
<div class="t" style="left:2321.0px;top:1813.4px;font-size:9.59px;color:#1a1a2a;font-weight:700;letter-spacing:-0.739px;">Think, plan and</div>
<div class="t" style="left:2322.0px;top:1821.4px;font-size:9.59px;color:#1a1a2a;font-weight:700;letter-spacing:-0.736px;">create together</div>
<div class="a" style="left:2341px;top:1846px;width:16px;height:5px;background:#6b3df0;border-radius:3px;"></div>
<svg class="a" style="left:2367px;top:1839px;" width="38" height="38" viewBox="0 0 100 100"><rect width="100" height="100" rx="23" fill="#fafafa"/><circle cx="50" cy="50" r="43.5" fill="#3d9a4e"/><path d="M12.33 28.25 A43.5 43.5 0 0 1 87.67 28.25 L50 28.25 A21.75 21.75 0 0 0 31.16 60.875 Z" fill="#dd5040"/><path d="M87.67 28.25 A43.5 43.5 0 0 1 50 93.5 L68.84 60.875 A21.75 21.75 0 0 0 50 28.25 Z" fill="#f2bb42"/><circle cx="50" cy="50" r="21" fill="#fff"/><circle cx="50" cy="50" r="16.5" fill="#4a80e6"/></svg>
<svg class="a" style="left:2436px;top:1754px;" width="96" height="124" viewBox="0 0 96 124"><defs><linearGradient id="tg" x1="0" y1="0" x2="1" y2="0"><stop offset="0" stop-color="#6a6c6e"/><stop offset="0.5" stop-color="#9a9c9e"/><stop offset="1" stop-color="#6a6c6e"/></linearGradient></defs><path d="M4 26 L14 112 Q16 120 48 120 Q80 120 82 112 L92 26 Z" fill="url(#tg)" opacity="0.9"/><ellipse cx="48" cy="26" rx="44" ry="8" fill="#8a8c8e"/><path d="M12 24 Q20 4 34 10 Q44 0 56 8 Q70 2 82 20 L84 26 Q48 34 12 26Z" fill="#e8e8e8"/><path d="M30 18 L40 28 L48 14Z" fill="#4a90c8"/><path d="M56 14 L66 28 L74 16Z" fill="#c06a3a"/></svg>
<div class="a" style="left:452px;top:1890px;width:8px;height:8px;background:rgba(220,225,220,0.6);border-radius:50%;"></div>
<div class="a" style="left:724px;top:1890px;width:8px;height:8px;background:rgba(220,225,220,0.6);border-radius:50%;"></div>
<div class="a" style="left:859.5px;top:1890px;width:8px;height:8px;background:rgba(220,225,220,0.6);border-radius:50%;"></div>
<div class="a" style="left:1131px;top:1890px;width:8px;height:8px;background:rgba(220,225,220,0.6);border-radius:50%;"></div>
<div class="a" style="left:1267px;top:1890px;width:8px;height:8px;background:rgba(220,225,220,0.6);border-radius:50%;"></div>
<div class="a" style="left:1403px;top:1890px;width:8px;height:8px;background:rgba(220,225,220,0.6);border-radius:50%;"></div>
<div class="a" style="left:1873.6px;top:1890px;width:8px;height:8px;background:rgba(220,225,220,0.6);border-radius:50%;"></div>
</body></html>
